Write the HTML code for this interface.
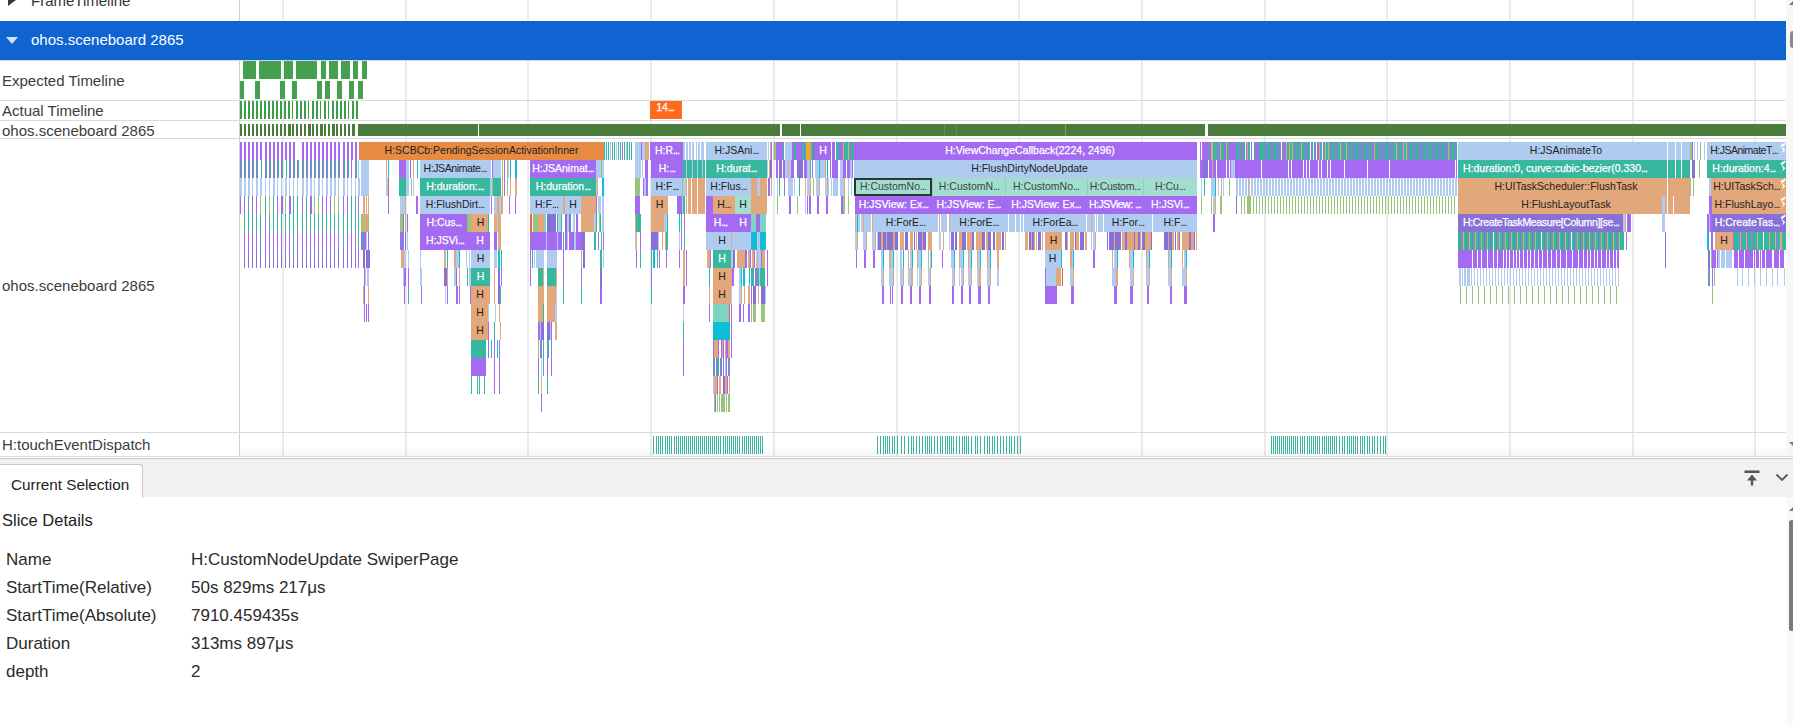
<!DOCTYPE html><html><head><meta charset="utf-8"><style>
*{margin:0;padding:0;box-sizing:border-box}
body{width:1793px;height:726px;overflow:hidden;background:#fff;font-family:"Liberation Sans",sans-serif;position:relative}
.a{position:absolute}
.t{position:absolute;overflow:hidden;white-space:nowrap;text-align:center;font-size:10.5px;line-height:18px}
.t i{font-style:normal;letter-spacing:-0.9px}
.w{-webkit-text-stroke:0.25px #fff}
.lbl{position:absolute;left:2px;font-size:15px;color:#3c3c3c;white-space:nowrap}
svg{position:absolute;left:0;top:0}
</style></head><body>
<div class="a" style="left:282px;top:0;width:2px;height:456px;background:#ebebeb"></div>
<div class="a" style="left:405px;top:0;width:2px;height:456px;background:#ebebeb"></div>
<div class="a" style="left:527px;top:0;width:2px;height:456px;background:#ebebeb"></div>
<div class="a" style="left:650px;top:0;width:2px;height:456px;background:#ebebeb"></div>
<div class="a" style="left:773px;top:0;width:2px;height:456px;background:#ebebeb"></div>
<div class="a" style="left:896px;top:0;width:2px;height:456px;background:#ebebeb"></div>
<div class="a" style="left:1018px;top:0;width:2px;height:456px;background:#ebebeb"></div>
<div class="a" style="left:1141px;top:0;width:2px;height:456px;background:#ebebeb"></div>
<div class="a" style="left:1264px;top:0;width:2px;height:456px;background:#ebebeb"></div>
<div class="a" style="left:1386px;top:0;width:2px;height:456px;background:#ebebeb"></div>
<div class="a" style="left:1509px;top:0;width:2px;height:456px;background:#ebebeb"></div>
<div class="a" style="left:1632px;top:0;width:2px;height:456px;background:#ebebeb"></div>
<div class="a" style="left:1754px;top:0;width:2px;height:456px;background:#ebebeb"></div>
<div class="a" style="left:239px;top:0;width:1px;height:456px;background:#c9d0de"></div>
<div class="a" style="left:0;top:60px;width:1786px;height:1px;background:#dadada"></div>
<div class="a" style="left:0;top:100px;width:1786px;height:1px;background:#dadada"></div>
<div class="a" style="left:0;top:120px;width:1786px;height:1px;background:#dadada"></div>
<div class="a" style="left:0;top:138px;width:1786px;height:1px;background:#dadada"></div>
<div class="a" style="left:0;top:432px;width:1786px;height:1px;background:#dadada"></div>
<div class="a" style="left:8px;top:-6px;width:0;height:0;border-left:8px solid #3a3a3a;border-top:6px solid transparent;border-bottom:6px solid transparent"></div>
<div class="lbl" style="left:31px;top:-8px;color:#333">FrameTimeline</div>
<div class="a" style="left:0;top:21px;width:1786px;height:39px;background:#0f64d2"></div>
<div class="a" style="left:6px;top:37px;width:0;height:0;border-top:7px solid #cfe0f7;border-left:6px solid transparent;border-right:6px solid transparent"></div>
<div class="lbl" style="left:31px;top:31px;color:#fff;font-size:15px">ohos.sceneboard 2865</div>
<div class="lbl" style="top:72px;color:#3c3c3c">Expected Timeline</div>
<div class="lbl" style="top:102px;color:#3c3c3c">Actual Timeline</div>
<div class="lbl" style="top:122px;color:#3c3c3c">ohos.sceneboard 2865</div>
<div class="lbl" style="top:277px;color:#3c3c3c">ohos.sceneboard 2865</div>
<div class="lbl" style="top:436px;color:#3c3c3c">H:touchEventDispatch</div>
<svg width="1793" height="726" shape-rendering="crispEdges"><path fill="#45a150" d="M243 61h13v18h-13zM259 61h22v18h-22zM284 61h9v18h-9zM296 61h21v18h-21zM321 61h5v18h-5zM329 61h9v18h-9zM341 61h9v18h-9zM353 61h5v18h-5zM362 61h5v18h-5zM240 81h4v18h-4zM255 81h5v18h-5zM280 81h5v18h-5zM292 81h5v18h-5zM317 81h5v18h-5zM325 81h5v18h-5zM337 81h5v18h-5zM349 81h5v18h-5zM358 81h5v18h-5z"/><path fill="#3d9e48" d="M240 101h2v18h-2zM244 101h2v18h-2zM248 101h2v18h-2zM252 101h2v18h-2zM256 101h2v18h-2zM260 101h2v18h-2zM264 101h2v18h-2zM268 101h2v18h-2zM272 101h2v18h-2zM276 101h2v18h-2zM280 101h2v18h-2zM284 101h2v18h-2zM288 101h2v18h-2zM292 101h1v18h-1zM296 101h2v18h-2zM300 101h2v18h-2zM304 101h2v18h-2zM308 101h1v18h-1zM312 101h2v18h-2zM316 101h2v18h-2zM320 101h1v18h-1zM324 101h2v18h-2zM328 101h1v18h-1zM332 101h2v18h-2zM336 101h2v18h-2zM340 101h2v18h-2zM344 101h2v18h-2zM348 101h1v18h-1zM352 101h2v18h-2zM356 101h2v18h-2z"/><path fill="#4a7d3c" d="M240 124h2v12h-2zM244 124h2v12h-2zM248 124h2v12h-2zM252 124h2v12h-2zM256 124h2v12h-2zM260 124h2v12h-2zM264 124h2v12h-2zM268 124h2v12h-2zM272 124h2v12h-2zM276 124h2v12h-2zM280 124h2v12h-2zM284 124h2v12h-2zM288 124h3v12h-3zM292 124h2v12h-2zM296 124h2v12h-2zM300 124h2v12h-2zM304 124h2v12h-2zM308 124h3v12h-3zM312 124h2v12h-2zM316 124h2v12h-2zM320 124h3v12h-3zM324 124h2v12h-2zM328 124h2v12h-2zM332 124h3v12h-3zM336 124h2v12h-2zM340 124h2v12h-2zM344 124h2v12h-2zM348 124h2v12h-2zM352 124h3v12h-3zM358 124h120v12h-120zM479 124h301v12h-301zM782 124h18v12h-18zM801 124h404v12h-404zM1208 124h578v12h-578z"/><path fill="#5f9050" d="M944 124h1v12h-1zM956 124h1v12h-1z"/><path fill="#8fa040" d="M1065 124h1v12h-1z"/><path fill="#ff6b1e" d="M650 101h32v18h-32z"/><path fill="#a56af2" d="M240 142h2v18h-2zM244 142h2v18h-2zM248 142h2v18h-2zM252 142h2v18h-2zM256 142h2v18h-2zM260 142h2v18h-2zM265 142h2v18h-2zM269 142h2v18h-2zM273 142h2v18h-2zM277 142h2v18h-2zM281 142h2v18h-2zM285 142h2v18h-2zM289 142h2v18h-2zM293 142h2v18h-2zM302 142h2v18h-2zM306 142h2v18h-2zM310 142h2v18h-2zM314 142h2v18h-2zM318 142h2v18h-2zM322 142h2v18h-2zM326 142h2v18h-2zM330 142h2v18h-2zM334 142h2v18h-2zM338 142h2v18h-2zM343 142h2v18h-2zM347 142h2v18h-2zM351 142h2v18h-2zM355 142h2v18h-2zM240 160h1v18h-1z"/><path fill="#38b79f" d="M241 160h1v18h-1z"/><path fill="#a56af2" d="M244 160h1v18h-1z"/><path fill="#38b79f" d="M245 160h1v18h-1z"/><path fill="#a56af2" d="M248 160h1v18h-1z"/><path fill="#38b79f" d="M249 160h1v18h-1z"/><path fill="#a56af2" d="M252 160h1v18h-1z"/><path fill="#38b79f" d="M253 160h1v18h-1z"/><path fill="#a56af2" d="M256 160h1v18h-1z"/><path fill="#38b79f" d="M257 160h1v18h-1zM261 160h1v18h-1z"/><path fill="#a56af2" d="M265 160h1v18h-1z"/><path fill="#38b79f" d="M266 160h1v18h-1z"/><path fill="#a56af2" d="M269 160h1v18h-1z"/><path fill="#38b79f" d="M270 160h1v18h-1z"/><path fill="#a56af2" d="M273 160h1v18h-1z"/><path fill="#38b79f" d="M274 160h1v18h-1z"/><path fill="#a56af2" d="M277 160h1v18h-1z"/><path fill="#38b79f" d="M278 160h1v18h-1z"/><path fill="#a56af2" d="M281 160h1v18h-1z"/><path fill="#38b79f" d="M282 160h1v18h-1zM286 160h1v18h-1z"/><path fill="#a56af2" d="M289 160h1v18h-1z"/><path fill="#38b79f" d="M290 160h1v18h-1z"/><path fill="#a56af2" d="M293 160h1v18h-1z"/><path fill="#38b79f" d="M294 160h1v18h-1z"/><path fill="#a56af2" d="M297 160h1v18h-1z"/><path fill="#38b79f" d="M298 160h1v18h-1z"/><path fill="#a56af2" d="M302 160h1v18h-1z"/><path fill="#38b79f" d="M303 160h1v18h-1z"/><path fill="#a56af2" d="M306 160h1v18h-1z"/><path fill="#38b79f" d="M307 160h1v18h-1z"/><path fill="#a56af2" d="M310 160h1v18h-1z"/><path fill="#38b79f" d="M311 160h1v18h-1z"/><path fill="#a56af2" d="M314 160h1v18h-1z"/><path fill="#38b79f" d="M315 160h1v18h-1z"/><path fill="#a56af2" d="M318 160h1v18h-1z"/><path fill="#38b79f" d="M319 160h1v18h-1z"/><path fill="#a56af2" d="M322 160h1v18h-1z"/><path fill="#38b79f" d="M323 160h1v18h-1z"/><path fill="#a56af2" d="M326 160h1v18h-1z"/><path fill="#38b79f" d="M327 160h1v18h-1z"/><path fill="#a56af2" d="M330 160h1v18h-1z"/><path fill="#38b79f" d="M331 160h1v18h-1z"/><path fill="#a56af2" d="M334 160h1v18h-1z"/><path fill="#38b79f" d="M335 160h1v18h-1z"/><path fill="#a56af2" d="M338 160h1v18h-1z"/><path fill="#38b79f" d="M339 160h1v18h-1z"/><path fill="#a56af2" d="M343 160h1v18h-1z"/><path fill="#38b79f" d="M344 160h1v18h-1z"/><path fill="#a56af2" d="M347 160h1v18h-1z"/><path fill="#38b79f" d="M348 160h1v18h-1z"/><path fill="#a56af2" d="M351 160h1v18h-1zM355 160h1v18h-1z"/><path fill="#38b79f" d="M356 160h1v18h-1z"/><path fill="#b0cbf0" d="M240 178h1v18h-1zM241 178h1v18h-1zM244 178h1v18h-1zM245 178h1v18h-1zM248 178h1v18h-1zM249 178h1v18h-1zM252 178h1v18h-1zM256 178h1v18h-1zM257 178h1v18h-1zM260 178h1v18h-1zM261 178h1v18h-1zM265 178h1v18h-1zM269 178h1v18h-1zM273 178h1v18h-1zM274 178h1v18h-1zM277 178h1v18h-1zM281 178h1v18h-1zM285 178h1v18h-1zM286 178h1v18h-1zM289 178h1v18h-1zM293 178h1v18h-1zM297 178h1v18h-1zM302 178h1v18h-1zM303 178h1v18h-1zM306 178h1v18h-1zM307 178h1v18h-1zM310 178h1v18h-1zM311 178h1v18h-1zM314 178h1v18h-1zM318 178h1v18h-1zM319 178h1v18h-1zM322 178h1v18h-1zM326 178h1v18h-1zM327 178h1v18h-1zM330 178h1v18h-1zM331 178h1v18h-1zM334 178h1v18h-1zM335 178h1v18h-1zM338 178h1v18h-1zM343 178h1v18h-1zM344 178h1v18h-1zM347 178h1v18h-1zM351 178h1v18h-1zM355 178h1v18h-1z"/><path fill="#a56af2" d="M240 196h1v18h-1zM244 196h1v18h-1z"/><path fill="#38b79f" d="M244 214h1v18h-1z"/><path fill="#a56af2" d="M244 232h1v18h-1z"/><path fill="#8770d6" d="M244 250h1v18h-1z"/><path fill="#38b79f" d="M248 196h1v18h-1zM248 214h1v18h-1z"/><path fill="#a56af2" d="M248 232h1v18h-1z"/><path fill="#8770d6" d="M248 250h1v18h-1z"/><path fill="#a56af2" d="M252 196h1v18h-1z"/><path fill="#38b79f" d="M252 214h1v18h-1z"/><path fill="#a56af2" d="M252 232h1v18h-1z"/><path fill="#8770d6" d="M252 250h1v18h-1z"/><path fill="#a56af2" d="M256 196h1v18h-1z"/><path fill="#38b79f" d="M256 214h1v18h-1z"/><path fill="#a56af2" d="M256 232h1v18h-1z"/><path fill="#8770d6" d="M256 250h1v18h-1z"/><path fill="#98c47e" d="M260 196h1v18h-1z"/><path fill="#38b79f" d="M260 214h1v18h-1zM260 232h1v18h-1z"/><path fill="#8770d6" d="M260 250h1v18h-1z"/><path fill="#38b79f" d="M265 196h1v18h-1z"/><path fill="#a56af2" d="M265 214h1v18h-1zM265 232h1v18h-1z"/><path fill="#8770d6" d="M265 250h1v18h-1z"/><path fill="#98c47e" d="M269 196h1v18h-1z"/><path fill="#38b79f" d="M269 214h1v18h-1z"/><path fill="#a56af2" d="M269 232h1v18h-1z"/><path fill="#8770d6" d="M269 250h1v18h-1z"/><path fill="#38b79f" d="M273 196h1v18h-1zM273 214h1v18h-1z"/><path fill="#a56af2" d="M273 232h1v18h-1z"/><path fill="#8770d6" d="M273 250h1v18h-1z"/><path fill="#a56af2" d="M277 196h1v18h-1z"/><path fill="#38b79f" d="M277 214h1v18h-1z"/><path fill="#a56af2" d="M277 232h1v18h-1z"/><path fill="#8770d6" d="M277 250h1v18h-1z"/><path fill="#a56af2" d="M281 196h2v18h-2z"/><path fill="#38b79f" d="M281 214h1v18h-1z"/><path fill="#a56af2" d="M281 232h1v18h-1z"/><path fill="#8770d6" d="M281 250h1v18h-1z"/><path fill="#98c47e" d="M285 196h1v18h-1z"/><path fill="#38b79f" d="M285 214h1v18h-1z"/><path fill="#a56af2" d="M285 232h1v18h-1z"/><path fill="#8770d6" d="M285 250h1v18h-1z"/><path fill="#a56af2" d="M289 196h2v18h-2z"/><path fill="#38b79f" d="M289 214h1v18h-1z"/><path fill="#a56af2" d="M289 232h1v18h-1z"/><path fill="#8770d6" d="M289 250h1v18h-1z"/><path fill="#38b79f" d="M293 196h1v18h-1zM293 214h1v18h-1zM293 232h1v18h-1z"/><path fill="#8770d6" d="M293 250h1v18h-1z"/><path fill="#38b79f" d="M297 196h1v18h-1zM297 214h1v18h-1z"/><path fill="#a56af2" d="M297 232h1v18h-1z"/><path fill="#8770d6" d="M297 250h1v18h-1z"/><path fill="#a56af2" d="M302 196h1v18h-1z"/><path fill="#38b79f" d="M302 214h1v18h-1z"/><path fill="#a56af2" d="M302 232h1v18h-1z"/><path fill="#8770d6" d="M302 250h1v18h-1z"/><path fill="#38b79f" d="M306 196h1v18h-1zM306 214h1v18h-1z"/><path fill="#a56af2" d="M306 232h1v18h-1z"/><path fill="#8770d6" d="M306 250h1v18h-1z"/><path fill="#a56af2" d="M310 196h2v18h-2z"/><path fill="#38b79f" d="M310 214h1v18h-1z"/><path fill="#a56af2" d="M310 232h1v18h-1z"/><path fill="#8770d6" d="M310 250h1v18h-1z"/><path fill="#98c47e" d="M314 196h1v18h-1z"/><path fill="#38b79f" d="M314 214h1v18h-1z"/><path fill="#a56af2" d="M314 232h1v18h-1z"/><path fill="#8770d6" d="M314 250h1v18h-1z"/><path fill="#98c47e" d="M318 196h1v18h-1z"/><path fill="#38b79f" d="M318 214h1v18h-1z"/><path fill="#a56af2" d="M318 232h1v18h-1z"/><path fill="#8770d6" d="M318 250h1v18h-1z"/><path fill="#a56af2" d="M322 196h1v18h-1z"/><path fill="#38b79f" d="M322 214h1v18h-1z"/><path fill="#a56af2" d="M322 232h1v18h-1z"/><path fill="#8770d6" d="M322 250h1v18h-1z"/><path fill="#a56af2" d="M326 196h1v18h-1z"/><path fill="#38b79f" d="M326 214h1v18h-1z"/><path fill="#a56af2" d="M326 232h1v18h-1z"/><path fill="#8770d6" d="M326 250h1v18h-1z"/><path fill="#a56af2" d="M330 196h1v18h-1z"/><path fill="#38b79f" d="M330 214h1v18h-1z"/><path fill="#a56af2" d="M330 232h1v18h-1z"/><path fill="#8770d6" d="M330 250h1v18h-1z"/><path fill="#98c47e" d="M334 196h1v18h-1z"/><path fill="#38b79f" d="M334 214h1v18h-1z"/><path fill="#a56af2" d="M334 232h1v18h-1z"/><path fill="#8770d6" d="M334 250h1v18h-1z"/><path fill="#98c47e" d="M338 196h1v18h-1z"/><path fill="#38b79f" d="M338 214h1v18h-1z"/><path fill="#a56af2" d="M338 232h1v18h-1z"/><path fill="#8770d6" d="M338 250h1v18h-1z"/><path fill="#a56af2" d="M343 196h1v18h-1z"/><path fill="#38b79f" d="M343 214h1v18h-1zM343 232h1v18h-1z"/><path fill="#8770d6" d="M343 250h1v18h-1z"/><path fill="#a56af2" d="M347 196h1v18h-1z"/><path fill="#38b79f" d="M347 214h1v18h-1z"/><path fill="#a56af2" d="M347 232h1v18h-1z"/><path fill="#8770d6" d="M347 250h1v18h-1z"/><path fill="#38b79f" d="M351 196h1v18h-1zM351 214h1v18h-1z"/><path fill="#a56af2" d="M351 232h1v18h-1z"/><path fill="#8770d6" d="M351 250h1v18h-1z"/><path fill="#38b79f" d="M355 196h1v18h-1zM355 214h1v18h-1z"/><path fill="#a56af2" d="M355 232h1v18h-1z"/><path fill="#8770d6" d="M355 250h1v18h-1z"/><path fill="#e88b42" d="M359 142h245v18h-245z"/><path fill="#b0cbf0" d="M358 160h1v18h-1zM361 160h8v18h-8z"/><path fill="#e2a77a" d="M386 160h1v18h-1z"/><path fill="#0fbdd5" d="M388 160h1v18h-1z"/><path fill="#a56af2" d="M399 160h7v18h-7z"/><path fill="#b0cbf0" d="M406 160h3v18h-3z"/><path fill="#a56af2" d="M410 160h1v18h-1z"/><path fill="#e2a77a" d="M413 160h1v18h-1z"/><path fill="#0fbdd5" d="M417 160h1v18h-1z"/><path fill="#b0cbf0" d="M420 160h71v18h-71z"/><path fill="#a56af2" d="M492 160h1v18h-1z"/><path fill="#b0cbf0" d="M493 160h8v18h-8z"/><path fill="#98c47e" d="M502 160h1v18h-1z"/><path fill="#a56af2" d="M504 160h1v18h-1z"/><path fill="#e2a77a" d="M507 160h1v18h-1z"/><path fill="#b0cbf0" d="M508 160h1v18h-1z"/><path fill="#0fbdd5" d="M510 160h1v18h-1zM515 160h2v18h-2z"/><path fill="#b0cbf0" d="M358 178h2v18h-2zM361 178h8v18h-8zM386 178h2v18h-2z"/><path fill="#e8604e" d="M388 178h1v18h-1z"/><path fill="#38b79f" d="M399 178h7v18h-7z"/><path fill="#b0cbf0" d="M406 178h3v18h-3z"/><path fill="#98c47e" d="M411 178h1v18h-1z"/><path fill="#b0cbf0" d="M413 178h1v18h-1z"/><path fill="#38b79f" d="M420 178h70v18h-70z"/><path fill="#b0cbf0" d="M490 178h2v18h-2z"/><path fill="#98c47e" d="M492 178h1v18h-1z"/><path fill="#38b79f" d="M493 178h8v18h-8z"/><path fill="#e2a77a" d="M502 178h1v18h-1z"/><path fill="#a56af2" d="M504 178h1v18h-1z"/><path fill="#98c47e" d="M507 178h1v18h-1z"/><path fill="#e2a77a" d="M510 178h1v18h-1zM515 178h2v18h-2z"/><path fill="#a56af2" d="M358 196h1v18h-1z"/><path fill="#e2a77a" d="M363 196h2v18h-2zM366 196h1v18h-1zM368 196h1v18h-1z"/><path fill="#a56af2" d="M388 196h1v18h-1z"/><path fill="#b0cbf0" d="M400 196h5v18h-5z"/><path fill="#e2a77a" d="M405 196h1v18h-1z"/><path fill="#a56af2" d="M416 196h2v18h-2z"/><path fill="#b0cbf0" d="M420 196h70v18h-70z"/><path fill="#a56af2" d="M491 196h1v18h-1z"/><path fill="#b0cbf0" d="M494 196h3v18h-3z"/><path fill="#e2a77a" d="M497 196h2v18h-2z"/><path fill="#b0cbf0" d="M499 196h2v18h-2z"/><path fill="#e2a77a" d="M501 196h2v18h-2z"/><path fill="#a56af2" d="M509 196h1v18h-1zM515 196h1v18h-1z"/><path fill="#38b79f" d="M358 214h1v18h-1z"/><path fill="#98c47e" d="M361 214h2v18h-2z"/><path fill="#e2a77a" d="M363 214h2v18h-2z"/><path fill="#98c47e" d="M365 214h1v18h-1z"/><path fill="#e2a77a" d="M366 214h2v18h-2z"/><path fill="#98c47e" d="M368 214h1v18h-1zM400 214h3v18h-3z"/><path fill="#a56af2" d="M403 214h1v18h-1z"/><path fill="#98c47e" d="M405 214h1v18h-1z"/><path fill="#a56af2" d="M407 214h1v18h-1zM420 214h47v18h-47z"/><path fill="#98c47e" d="M467 214h4v18h-4z"/><path fill="#e2a77a" d="M471 214h17v18h-17z"/><path fill="#0fbdd5" d="M488 214h1v18h-1z"/><path fill="#e2a77a" d="M494 214h3v18h-3z"/><path fill="#b0cbf0" d="M497 214h1v18h-1z"/><path fill="#e2a77a" d="M498 214h3v18h-3z"/><path fill="#38b79f" d="M358 232h1v18h-1z"/><path fill="#a56af2" d="M361 232h2v18h-2z"/><path fill="#38b79f" d="M363 232h1v18h-1z"/><path fill="#a56af2" d="M364 232h2v18h-2z"/><path fill="#b0cbf0" d="M366 232h1v18h-1z"/><path fill="#a56af2" d="M368 232h1v18h-1zM400 232h3v18h-3z"/><path fill="#38b79f" d="M403 232h1v18h-1z"/><path fill="#a56af2" d="M405 232h1v18h-1z"/><path fill="#b0cbf0" d="M407 232h1v18h-1z"/><path fill="#a56af2" d="M420 232h70v18h-70zM494 232h3v18h-3z"/><path fill="#e2a77a" d="M498 232h3v18h-3z"/><path fill="#a56af2" d="M358 250h1v18h-1z"/><path fill="#8770d6" d="M363 250h2v18h-2zM366 250h4v18h-4z"/><path fill="#e2a77a" d="M401 250h3v18h-3z"/><path fill="#b0cbf0" d="M404 250h2v18h-2zM408 250h1v18h-1zM420 250h1v18h-1z"/><path fill="#e2a77a" d="M444 250h2v18h-2z"/><path fill="#0fbdd5" d="M447 250h1v18h-1z"/><path fill="#e2a77a" d="M454 250h2v18h-2z"/><path fill="#b0cbf0" d="M456 250h3v18h-3z"/><path fill="#0fbdd5" d="M459 250h1v18h-1z"/><path fill="#b0cbf0" d="M466 250h1v18h-1zM469 250h1v18h-1zM471 250h19v18h-19zM494 250h3v18h-3z"/><path fill="#0fbdd5" d="M498 250h1v18h-1z"/><path fill="#38b79f" d="M499 250h1v18h-1z"/><path fill="#0fbdd5" d="M501 250h1v18h-1z"/><path fill="#a56af2" d="M364 268h1v18h-1z"/><path fill="#b0cbf0" d="M365 268h1v18h-1zM367 268h2v18h-2zM403 268h1v18h-1z"/><path fill="#a56af2" d="M404 268h2v18h-2zM408 268h1v18h-1z"/><path fill="#b0cbf0" d="M420 268h2v18h-2z"/><path fill="#8770d6" d="M444 268h3v18h-3z"/><path fill="#e2a77a" d="M447 268h1v18h-1z"/><path fill="#b0cbf0" d="M454 268h2v18h-2z"/><path fill="#8770d6" d="M456 268h1v18h-1z"/><path fill="#e2a77a" d="M459 268h1v18h-1z"/><path fill="#38b79f" d="M467 268h1v18h-1z"/><path fill="#b0cbf0" d="M469 268h2v18h-2z"/><path fill="#38b79f" d="M471 268h19v18h-19z"/><path fill="#e2a77a" d="M494 268h1v18h-1z"/><path fill="#8770d6" d="M498 268h2v18h-2z"/><path fill="#a56af2" d="M501 268h1v18h-1z"/><path fill="#e2a77a" d="M363 286h1v18h-1z"/><path fill="#a56af2" d="M364 286h1v18h-1z"/><path fill="#e2a77a" d="M368 286h1v18h-1z"/><path fill="#a56af2" d="M404 286h1v18h-1z"/><path fill="#38b79f" d="M408 286h1v18h-1z"/><path fill="#a56af2" d="M421 286h1v18h-1z"/><path fill="#b0cbf0" d="M445 286h1v18h-1z"/><path fill="#a56af2" d="M447 286h1v18h-1zM456 286h2v18h-2zM459 286h1v18h-1zM470 286h1v18h-1z"/><path fill="#e2a77a" d="M471 286h19v18h-19zM494 286h1v18h-1z"/><path fill="#8770d6" d="M498 286h2v18h-2z"/><path fill="#38b79f" d="M500 286h1v18h-1z"/><path fill="#a56af2" d="M364 304h1v18h-1zM366 304h1v18h-1zM368 304h1v18h-1z"/><path fill="#e2a77a" d="M471 304h18v18h-18z"/><path fill="#b0cbf0" d="M488 304h1v18h-1zM495 304h1v18h-1z"/><path fill="#e2a77a" d="M499 304h1v18h-1zM471 322h17v18h-17z"/><path fill="#a56af2" d="M488 322h1v18h-1z"/><path fill="#38b79f" d="M494 322h1v18h-1z"/><path fill="#e2a77a" d="M500 322h1v18h-1z"/><path fill="#38b79f" d="M471 340h15v18h-15z"/><path fill="#a56af2" d="M471 358h15v18h-15z"/><path fill="#38b79f" d="M471 376h1v18h-1zM477 376h1v18h-1zM479 376h1v18h-1zM484 376h1v18h-1z"/><path fill="#a56af2" d="M488 340h1v18h-1zM494 340h1v54h-1zM499 340h1v54h-1z"/><path fill="#0fbdd5" d="M491 340h1v18h-1zM497 340h1v18h-1zM604 142h1v18h-1z"/><path fill="#38b79f" d="M606 142h1v18h-1zM608 142h1v18h-1z"/><path fill="#b0cbf0" d="M610 142h1v18h-1z"/><path fill="#38b79f" d="M612 142h1v18h-1zM614 142h1v18h-1z"/><path fill="#b0cbf0" d="M616 142h1v18h-1z"/><path fill="#38b79f" d="M618 142h1v18h-1zM620 142h1v18h-1z"/><path fill="#a56af2" d="M622 142h1v18h-1z"/><path fill="#38b79f" d="M624 142h1v18h-1z"/><path fill="#b0cbf0" d="M626 142h1v18h-1z"/><path fill="#38b79f" d="M627 142h1v18h-1zM629 142h1v18h-1zM631 142h1v18h-1z"/><path fill="#b0cbf0" d="M635 142h6v18h-6z"/><path fill="#a56af2" d="M641 142h1v18h-1z"/><path fill="#b0cbf0" d="M642 142h3v18h-3z"/><path fill="#e2a77a" d="M645 142h4v18h-4z"/><path fill="#a56af2" d="M650 142h33v18h-33z"/><path fill="#b0cbf0" d="M683 142h2v18h-2zM686 142h2v18h-2zM689 142h2v18h-2zM692 142h2v18h-2zM696 142h1v18h-1zM698 142h2v18h-2zM701 142h3v18h-3z"/><path fill="#a56af2" d="M530 160h66v18h-66z"/><path fill="#b0cbf0" d="M596 160h5v18h-5z"/><path fill="#98c47e" d="M601 160h1v18h-1z"/><path fill="#b0cbf0" d="M602 160h2v18h-2zM635 160h6v18h-6zM642 160h1v18h-1z"/><path fill="#a56af2" d="M645 160h3v18h-3zM651 160h32v18h-32z"/><path fill="#38b79f" d="M683 160h22v18h-22z"/><path fill="#b0cbf0" d="M686 160h1v18h-1zM692 160h1v18h-1zM697 160h1v18h-1zM702 160h1v18h-1z"/><path fill="#38b79f" d="M530 178h66v18h-66z"/><path fill="#b0cbf0" d="M596 178h1v18h-1z"/><path fill="#e2a77a" d="M597 178h1v18h-1z"/><path fill="#0fbdd5" d="M602 178h2v18h-2z"/><path fill="#98c47e" d="M635 178h5v18h-5z"/><path fill="#a56af2" d="M643 178h1v18h-1z"/><path fill="#b0cbf0" d="M644 178h2v18h-2z"/><path fill="#a56af2" d="M646 178h2v18h-2z"/><path fill="#b0cbf0" d="M651 178h31v18h-31z"/><path fill="#98c47e" d="M682 178h1v18h-1z"/><path fill="#b0cbf0" d="M683 178h3v18h-3z"/><path fill="#e2a77a" d="M686 178h1v18h-1zM688 178h3v18h-3zM692 178h5v18h-5zM698 178h4v18h-4zM702 178h3v18h-3z"/><path fill="#b0cbf0" d="M530 196h33v18h-33z"/><path fill="#e2a77a" d="M563 196h2v18h-2z"/><path fill="#b0cbf0" d="M565 196h16v18h-16z"/><path fill="#e2a77a" d="M581 196h15v18h-15z"/><path fill="#a56af2" d="M596 196h1v18h-1z"/><path fill="#b0cbf0" d="M598 196h3v18h-3zM602 196h2v18h-2z"/><path fill="#a56af2" d="M635 196h5v18h-5z"/><path fill="#e2a77a" d="M651 196h17v18h-17z"/><path fill="#a56af2" d="M677 196h5v18h-5z"/><path fill="#b0cbf0" d="M682 196h1v18h-1z"/><path fill="#38b79f" d="M683 196h2v18h-2z"/><path fill="#e2a77a" d="M686 196h1v18h-1zM688 196h3v18h-3zM692 196h5v18h-5zM698 196h4v18h-4zM702 196h3v18h-3z"/><path fill="#e8604e" d="M530 214h2v18h-2z"/><path fill="#98c47e" d="M533 214h5v18h-5z"/><path fill="#e2a77a" d="M538 214h6v18h-6z"/><path fill="#7dd4c1" d="M544 214h2v18h-2z"/><path fill="#8770d6" d="M547 214h9v18h-9z"/><path fill="#38b79f" d="M557 214h1v18h-1z"/><path fill="#b0cbf0" d="M558 214h3v18h-3z"/><path fill="#38b79f" d="M561 214h1v18h-1z"/><path fill="#8770d6" d="M565 214h2v18h-2z"/><path fill="#b0cbf0" d="M567 214h2v18h-2z"/><path fill="#8770d6" d="M569 214h2v18h-2z"/><path fill="#b0cbf0" d="M573 214h2v18h-2z"/><path fill="#a56af2" d="M576 214h2v18h-2z"/><path fill="#e2a77a" d="M581 214h13v18h-13z"/><path fill="#b0cbf0" d="M594 214h2v18h-2z"/><path fill="#38b79f" d="M596 214h1v18h-1z"/><path fill="#98c47e" d="M599 214h1v18h-1z"/><path fill="#38b79f" d="M600 214h1v18h-1z"/><path fill="#b0cbf0" d="M602 214h2v18h-2z"/><path fill="#e2a77a" d="M635 214h1v18h-1z"/><path fill="#38b79f" d="M636 214h5v18h-5z"/><path fill="#e2a77a" d="M651 214h13v18h-13z"/><path fill="#b0cbf0" d="M664 214h3v18h-3z"/><path fill="#38b79f" d="M667 214h1v18h-1z"/><path fill="#0fbdd5" d="M679 214h1v18h-1z"/><path fill="#38b79f" d="M681 214h1v18h-1z"/><path fill="#a56af2" d="M684 214h1v18h-1zM530 232h16v18h-16z"/><path fill="#b0cbf0" d="M546 232h1v18h-1z"/><path fill="#a56af2" d="M547 232h10v18h-10z"/><path fill="#b0cbf0" d="M557 232h1v18h-1z"/><path fill="#a56af2" d="M558 232h4v18h-4z"/><path fill="#38b79f" d="M563 232h1v18h-1z"/><path fill="#a56af2" d="M565 232h2v18h-2z"/><path fill="#b0cbf0" d="M567 232h1v18h-1z"/><path fill="#a56af2" d="M569 232h5v18h-5z"/><path fill="#b0cbf0" d="M574 232h2v18h-2z"/><path fill="#a56af2" d="M576 232h6v18h-6z"/><path fill="#8770d6" d="M582 232h3v18h-3z"/><path fill="#38b79f" d="M594 232h2v18h-2z"/><path fill="#a56af2" d="M598 232h1v18h-1z"/><path fill="#38b79f" d="M601 232h1v18h-1z"/><path fill="#a56af2" d="M603 232h1v18h-1z"/><path fill="#b0cbf0" d="M635 232h1v18h-1z"/><path fill="#e2a77a" d="M636 232h1v18h-1z"/><path fill="#a56af2" d="M640 232h1v18h-1z"/><path fill="#8770d6" d="M651 232h7v18h-7z"/><path fill="#b0cbf0" d="M658 232h1v18h-1z"/><path fill="#e2a77a" d="M662 232h1v18h-1zM665 232h1v18h-1z"/><path fill="#38b79f" d="M666 232h2v18h-2z"/><path fill="#b0cbf0" d="M679 232h1v18h-1z"/><path fill="#a56af2" d="M681 232h1v18h-1z"/><path fill="#38b79f" d="M684 232h1v18h-1z"/><path fill="#a56af2" d="M530 250h1v18h-1z"/><path fill="#38b79f" d="M532 250h1v18h-1z"/><path fill="#b0cbf0" d="M534 250h1v18h-1zM536 250h8v18h-8zM547 250h10v18h-10z"/><path fill="#a56af2" d="M563 250h1v18h-1z"/><path fill="#98c47e" d="M581 250h1v18h-1z"/><path fill="#8770d6" d="M583 250h2v18h-2z"/><path fill="#38b79f" d="M600 250h2v18h-2z"/><path fill="#b0cbf0" d="M603 250h1v18h-1z"/><path fill="#a56af2" d="M636 250h1v18h-1z"/><path fill="#38b79f" d="M640 250h1v18h-1zM651 250h1v18h-1z"/><path fill="#0fbdd5" d="M653 250h2v18h-2z"/><path fill="#38b79f" d="M657 250h1v18h-1z"/><path fill="#a56af2" d="M659 250h1v18h-1zM666 250h1v18h-1zM679 250h1v18h-1z"/><path fill="#e2a77a" d="M683 250h2v18h-2z"/><path fill="#a56af2" d="M686 250h1v18h-1zM530 268h1v18h-1z"/><path fill="#38b79f" d="M538 268h5v18h-5z"/><path fill="#e2a77a" d="M543 268h1v18h-1z"/><path fill="#38b79f" d="M547 268h9v18h-9z"/><path fill="#e2a77a" d="M556 268h1v18h-1z"/><path fill="#a56af2" d="M563 268h1v18h-1zM581 268h1v18h-1z"/><path fill="#8770d6" d="M600 268h2v18h-2z"/><path fill="#a56af2" d="M651 268h1v18h-1z"/><path fill="#e2a77a" d="M683 268h2v18h-2z"/><path fill="#a56af2" d="M686 268h1v18h-1z"/><path fill="#e2a77a" d="M538 286h6v18h-6zM547 286h9v18h-9z"/><path fill="#b0cbf0" d="M556 286h1v18h-1z"/><path fill="#38b79f" d="M563 286h1v18h-1zM581 286h1v18h-1z"/><path fill="#a56af2" d="M600 286h2v18h-2z"/><path fill="#38b79f" d="M651 286h1v18h-1z"/><path fill="#a56af2" d="M683 286h2v18h-2z"/><path fill="#e2a77a" d="M538 304h5v18h-5z"/><path fill="#38b79f" d="M543 304h1v18h-1z"/><path fill="#e2a77a" d="M547 304h8v18h-8z"/><path fill="#b0cbf0" d="M555 304h2v18h-2zM683 304h1v18h-1z"/><path fill="#a56af2" d="M538 322h2v18h-2z"/><path fill="#b0cbf0" d="M540 322h1v18h-1z"/><path fill="#8770d6" d="M541 322h3v18h-3zM547 322h3v18h-3z"/><path fill="#b0cbf0" d="M550 322h1v18h-1z"/><path fill="#a56af2" d="M551 322h1v18h-1z"/><path fill="#e2a77a" d="M555 322h2v18h-2z"/><path fill="#38b79f" d="M683 322h1v18h-1z"/><path fill="#98c47e" d="M538 340h1v18h-1z"/><path fill="#a56af2" d="M540 340h2v18h-2z"/><path fill="#38b79f" d="M543 340h1v18h-1zM547 340h2v18h-2z"/><path fill="#a56af2" d="M551 340h1v18h-1zM538 358h1v18h-1z"/><path fill="#b0cbf0" d="M541 358h1v18h-1z"/><path fill="#38b79f" d="M543 358h1v18h-1z"/><path fill="#a56af2" d="M547 358h1v18h-1zM551 358h1v18h-1z"/><path fill="#38b79f" d="M538 376h1v18h-1z"/><path fill="#e2a77a" d="M541 376h1v18h-1z"/><path fill="#38b79f" d="M547 376h1v18h-1z"/><path fill="#a56af2" d="M541 394h1v18h-1zM683 340h1v36h-1z"/><path fill="#b0cbf0" d="M706 142h61v18h-61z"/><path fill="#38b79f" d="M706 160h61v18h-61z"/><path fill="#b0cbf0" d="M706 178h45v18h-45z"/><path fill="#e2a77a" d="M751 178h6v18h-6z"/><path fill="#b0cbf0" d="M757 178h3v18h-3z"/><path fill="#e2a77a" d="M760 178h7v18h-7z"/><path fill="#a56af2" d="M706 196h7v18h-7z"/><path fill="#e2a77a" d="M713 196h22v18h-22z"/><path fill="#a2ddce" d="M735 196h16v18h-16z"/><path fill="#e2a77a" d="M751 196h16v18h-16z"/><path fill="#a56af2" d="M706 214h29v18h-29zM735 214h16v18h-16z"/><path fill="#7dd4c1" d="M751 214h5v18h-5z"/><path fill="#a56af2" d="M756 214h4v18h-4z"/><path fill="#7dd4c1" d="M760 214h6v18h-6z"/><path fill="#b0cbf0" d="M706 232h45v18h-45z"/><path fill="#e2a77a" d="M731 232h1v18h-1z"/><path fill="#0fbdd5" d="M751 232h6v18h-6z"/><path fill="#b0cbf0" d="M757 232h3v18h-3z"/><path fill="#0fbdd5" d="M760 232h6v18h-6z"/><path fill="#e2a77a" d="M707 250h3v18h-3z"/><path fill="#a56af2" d="M710 250h1v18h-1z"/><path fill="#38b79f" d="M713 250h18v18h-18z"/><path fill="#b0cbf0" d="M731 250h2v18h-2z"/><path fill="#8770d6" d="M733 250h2v18h-2z"/><path fill="#e2a77a" d="M737 250h8v18h-8z"/><path fill="#a56af2" d="M745 250h2v18h-2z"/><path fill="#e2a77a" d="M748 250h2v18h-2z"/><path fill="#a56af2" d="M750 250h1v18h-1z"/><path fill="#e2a77a" d="M752 250h2v18h-2z"/><path fill="#a56af2" d="M754 250h1v18h-1z"/><path fill="#b0cbf0" d="M756 250h1v18h-1z"/><path fill="#e2a77a" d="M757 250h1v18h-1z"/><path fill="#b0cbf0" d="M758 250h3v18h-3z"/><path fill="#a56af2" d="M761 250h1v18h-1z"/><path fill="#e2a77a" d="M762 250h3v18h-3z"/><path fill="#a56af2" d="M767 250h1v18h-1z"/><path fill="#0fbdd5" d="M709 268h1v18h-1z"/><path fill="#e2a77a" d="M713 268h19v18h-19z"/><path fill="#a56af2" d="M732 268h2v18h-2z"/><path fill="#b0cbf0" d="M739 268h2v18h-2z"/><path fill="#0fbdd5" d="M741 268h1v18h-1zM743 268h2v18h-2zM749 268h1v18h-1z"/><path fill="#38b79f" d="M751 268h3v18h-3z"/><path fill="#a56af2" d="M755 268h2v18h-2z"/><path fill="#38b79f" d="M757 268h2v18h-2z"/><path fill="#b0cbf0" d="M759 268h1v18h-1z"/><path fill="#38b79f" d="M760 268h5v18h-5z"/><path fill="#a56af2" d="M767 268h1v18h-1z"/><path fill="#e2a77a" d="M709 286h1v18h-1zM713 286h18v18h-18z"/><path fill="#b0cbf0" d="M731 286h1v18h-1zM739 286h2v18h-2z"/><path fill="#e2a77a" d="M741 286h1v18h-1zM744 286h1v18h-1zM748 286h2v18h-2z"/><path fill="#a56af2" d="M751 286h1v18h-1z"/><path fill="#8770d6" d="M753 286h3v18h-3z"/><path fill="#e2a77a" d="M758 286h1v18h-1z"/><path fill="#8770d6" d="M761 286h4v18h-4z"/><path fill="#b0cbf0" d="M765 286h1v18h-1z"/><path fill="#a56af2" d="M709 304h1v18h-1z"/><path fill="#7dd4c1" d="M713 304h16v18h-16z"/><path fill="#e8604e" d="M729 304h1v18h-1z"/><path fill="#a56af2" d="M731 304h1v18h-1zM739 304h2v18h-2zM743 304h1v18h-1zM748 304h2v18h-2z"/><path fill="#98c47e" d="M751 304h1v18h-1zM753 304h3v18h-3zM761 304h4v18h-4z"/><path fill="#0fbdd5" d="M713 322h17v18h-17z"/><path fill="#a56af2" d="M731 322h1v18h-1zM713 340h1v18h-1z"/><path fill="#e2a77a" d="M714 340h4v18h-4z"/><path fill="#a56af2" d="M718 340h1v18h-1zM721 340h1v18h-1z"/><path fill="#e2a77a" d="M722 340h1v18h-1z"/><path fill="#a56af2" d="M723 340h1v18h-1z"/><path fill="#e2a77a" d="M725 340h1v18h-1z"/><path fill="#a56af2" d="M726 340h2v18h-2z"/><path fill="#e2a77a" d="M728 340h2v18h-2z"/><path fill="#a56af2" d="M731 340h1v18h-1z"/><path fill="#38b79f" d="M713 358h1v18h-1z"/><path fill="#a56af2" d="M714 358h1v18h-1z"/><path fill="#38b79f" d="M716 358h1v18h-1z"/><path fill="#a56af2" d="M717 358h1v18h-1z"/><path fill="#38b79f" d="M718 358h1v18h-1z"/><path fill="#a56af2" d="M720 358h1v18h-1z"/><path fill="#38b79f" d="M721 358h1v18h-1z"/><path fill="#a56af2" d="M723 358h1v18h-1z"/><path fill="#b0cbf0" d="M725 358h1v18h-1z"/><path fill="#a56af2" d="M726 358h1v18h-1z"/><path fill="#38b79f" d="M728 358h1v18h-1z"/><path fill="#a56af2" d="M729 358h1v18h-1z"/><path fill="#b0cbf0" d="M713 376h1v18h-1z"/><path fill="#e2a77a" d="M714 376h3v18h-3z"/><path fill="#a56af2" d="M717 376h1v18h-1z"/><path fill="#e2a77a" d="M719 376h2v18h-2z"/><path fill="#8770d6" d="M723 376h2v18h-2z"/><path fill="#e2a77a" d="M725 376h2v18h-2z"/><path fill="#a56af2" d="M727 376h1v18h-1z"/><path fill="#e2a77a" d="M729 376h1v18h-1z"/><path fill="#98c47e" d="M714 394h1v18h-1z"/><path fill="#a56af2" d="M715 394h1v18h-1z"/><path fill="#98c47e" d="M717 394h1v18h-1zM719 394h1v18h-1zM721 394h4v18h-4zM726 394h1v18h-1zM728 394h2v18h-2z"/><path fill="#b0cbf0" d="M768 142h1v18h-1z"/><path fill="#e2a77a" d="M770 142h1v18h-1z"/><path fill="#a56af2" d="M771 142h1v18h-1z"/><path fill="#b0cbf0" d="M773 142h1v18h-1z"/><path fill="#98c47e" d="M774 142h2v18h-2z"/><path fill="#a56af2" d="M776 142h7v18h-7z"/><path fill="#38b79f" d="M783 142h1v18h-1z"/><path fill="#b0cbf0" d="M785 142h7v18h-7z"/><path fill="#a56af2" d="M792 142h2v18h-2z"/><path fill="#38b79f" d="M794 142h2v18h-2z"/><path fill="#a56af2" d="M796 142h6v18h-6z"/><path fill="#38b79f" d="M802 142h2v18h-2z"/><path fill="#a56af2" d="M804 142h1v18h-1z"/><path fill="#38b79f" d="M805 142h1v18h-1z"/><path fill="#e9a83a" d="M806 142h5v18h-5z"/><path fill="#38b79f" d="M811 142h2v18h-2z"/><path fill="#8770d6" d="M813 142h2v18h-2z"/><path fill="#a56af2" d="M815 142h16v18h-16zM832 142h3v18h-3z"/><path fill="#38b79f" d="M836 142h3v18h-3z"/><path fill="#a56af2" d="M839 142h4v18h-4z"/><path fill="#e2a77a" d="M843 142h1v18h-1z"/><path fill="#38b79f" d="M844 142h4v18h-4z"/><path fill="#e2a77a" d="M848 142h1v18h-1z"/><path fill="#38b79f" d="M849 142h2v18h-2z"/><path fill="#a56af2" d="M851 142h1v18h-1z"/><path fill="#38b79f" d="M852 142h2v18h-2z"/><path fill="#b0cbf0" d="M767 160h1v18h-1z"/><path fill="#e2a77a" d="M769 160h1v18h-1z"/><path fill="#8770d6" d="M770 160h2v18h-2z"/><path fill="#a56af2" d="M776 160h2v18h-2z"/><path fill="#8770d6" d="M779 160h3v18h-3z"/><path fill="#a56af2" d="M783 160h2v18h-2z"/><path fill="#b0cbf0" d="M785 160h3v18h-3z"/><path fill="#e2a77a" d="M788 160h1v18h-1z"/><path fill="#b0cbf0" d="M789 160h2v18h-2z"/><path fill="#a56af2" d="M791 160h3v18h-3z"/><path fill="#8770d6" d="M797 160h6v18h-6z"/><path fill="#a56af2" d="M804 160h3v18h-3z"/><path fill="#b0cbf0" d="M807 160h3v18h-3z"/><path fill="#38b79f" d="M810 160h1v18h-1z"/><path fill="#a56af2" d="M812 160h1v18h-1z"/><path fill="#b0cbf0" d="M815 160h4v18h-4z"/><path fill="#0fbdd5" d="M819 160h1v18h-1z"/><path fill="#b0cbf0" d="M820 160h5v18h-5z"/><path fill="#e2a77a" d="M825 160h1v18h-1z"/><path fill="#0fbdd5" d="M827 160h1v18h-1z"/><path fill="#a56af2" d="M830 160h1v18h-1zM832 160h6v18h-6z"/><path fill="#b0cbf0" d="M840 160h3v18h-3z"/><path fill="#a56af2" d="M843 160h3v18h-3zM847 160h3v18h-3z"/><path fill="#b0cbf0" d="M850 160h2v18h-2z"/><path fill="#a56af2" d="M852 160h1v18h-1zM768 178h2v18h-2z"/><path fill="#98c47e" d="M771 178h1v18h-1z"/><path fill="#b0cbf0" d="M777 178h1v18h-1z"/><path fill="#38b79f" d="M779 178h1v18h-1z"/><path fill="#a56af2" d="M784 178h1v18h-1z"/><path fill="#b0cbf0" d="M788 178h2v18h-2zM790 178h3v18h-3zM794 178h1v18h-1z"/><path fill="#38b79f" d="M799 178h1v18h-1z"/><path fill="#e2a77a" d="M805 178h1v18h-1z"/><path fill="#b0cbf0" d="M807 178h3v18h-3z"/><path fill="#e2a77a" d="M810 178h1v18h-1z"/><path fill="#98c47e" d="M813 178h1v18h-1z"/><path fill="#b0cbf0" d="M816 178h3v18h-3z"/><path fill="#e2a77a" d="M819 178h1v18h-1z"/><path fill="#b0cbf0" d="M825 178h2v18h-2z"/><path fill="#e2a77a" d="M827 178h1v18h-1z"/><path fill="#b0cbf0" d="M828 178h1v18h-1zM831 178h1v18h-1zM833 178h5v18h-5zM840 178h4v18h-4z"/><path fill="#e2a77a" d="M844 178h1v18h-1z"/><path fill="#b0cbf0" d="M848 178h1v18h-1zM851 178h1v18h-1z"/><path fill="#98c47e" d="M777 196h1v18h-1z"/><path fill="#a56af2" d="M789 196h2v18h-2z"/><path fill="#98c47e" d="M797 196h1v18h-1z"/><path fill="#b0cbf0" d="M805 196h1v18h-1z"/><path fill="#a56af2" d="M807 196h1v18h-1zM809 196h2v18h-2zM817 196h2v18h-2zM826 196h2v18h-2zM841 196h2v18h-2z"/><path fill="#98c47e" d="M843 196h2v18h-2zM848 196h1v18h-1z"/><path fill="#a56af2" d="M854 142h343v18h-343z"/><path fill="#b0cbf0" d="M854 160h343v18h-343z"/><path fill="#a2ddce" d="M854 178h78v18h-78zM933 178h72v18h-72zM1005 178h82v18h-82zM1087 178h56v18h-56zM1143 178h54v18h-54z"/><path fill="#8fcfbf" d="M932 178h1v18h-1zM1005 178h1v18h-1zM1087 178h1v18h-1zM1143 178h1v18h-1z"/><path fill="#a56af2" d="M855 196h77v18h-77zM932 196h73v18h-73zM1005 196h82v18h-82zM1087 196h56v18h-56zM1143 196h54v18h-54z"/><path fill="#e2a77a" d="M855 214h1v18h-1z"/><path fill="#b0cbf0" d="M856 214h1v18h-1z"/><path fill="#0fbdd5" d="M857 214h1v18h-1z"/><path fill="#b0cbf0" d="M858 214h2v18h-2zM861 214h2v18h-2z"/><path fill="#e2a77a" d="M863 214h1v18h-1z"/><path fill="#b0cbf0" d="M864 214h7v18h-7z"/><path fill="#e2a77a" d="M872 214h1v18h-1z"/><path fill="#b0cbf0" d="M873 214h65v18h-65z"/><path fill="#e2a77a" d="M939 214h1v18h-1z"/><path fill="#b0cbf0" d="M941 214h6v18h-6z"/><path fill="#e2a77a" d="M949 214h1v18h-1z"/><path fill="#b0cbf0" d="M950 214h58v18h-58zM1009 214h6v18h-6zM1016 214h4v18h-4zM1021 214h2v18h-2zM1021 214h2v18h-2zM1024 214h62v18h-62zM1087 214h4v18h-4z"/><path fill="#e2a77a" d="M1091 214h1v18h-1z"/><path fill="#b0cbf0" d="M1092 214h3v18h-3zM1096 214h1v18h-1zM1098 214h5v18h-5zM1104 214h48v18h-48zM1153 214h44v18h-44zM855 232h2v18h-2z"/><path fill="#e2a77a" d="M857 232h1v18h-1z"/><path fill="#b0cbf0" d="M863 232h3v18h-3z"/><path fill="#e2a77a" d="M866 232h1v18h-1z"/><path fill="#b0cbf0" d="M872 232h3v18h-3z"/><path fill="#e2a77a" d="M875 232h1v18h-1z"/><path fill="#b0cbf0" d="M877 232h1v18h-1z"/><path fill="#8770d6" d="M878 232h3v18h-3z"/><path fill="#e2a77a" d="M881 232h2v18h-2z"/><path fill="#8770d6" d="M883 232h3v18h-3z"/><path fill="#e2a77a" d="M886 232h1v18h-1z"/><path fill="#8770d6" d="M887 232h3v18h-3zM890 232h3v18h-3z"/><path fill="#e2a77a" d="M893 232h2v18h-2z"/><path fill="#8770d6" d="M895 232h3v18h-3z"/><path fill="#e2a77a" d="M900 232h4v18h-4z"/><path fill="#8770d6" d="M905 232h3v18h-3z"/><path fill="#e2a77a" d="M910 232h3v18h-3z"/><path fill="#8770d6" d="M914 232h1v18h-1z"/><path fill="#e2a77a" d="M916 232h1v18h-1z"/><path fill="#8770d6" d="M918 232h4v18h-4z"/><path fill="#e2a77a" d="M922 232h1v18h-1z"/><path fill="#8770d6" d="M923 232h3v18h-3z"/><path fill="#e2a77a" d="M928 232h4v18h-4z"/><path fill="#b0cbf0" d="M939 232h2v18h-2z"/><path fill="#e2a77a" d="M943 232h1v18h-1z"/><path fill="#b0cbf0" d="M949 232h1v18h-1z"/><path fill="#8770d6" d="M951 232h3v18h-3zM955 232h2v18h-2z"/><path fill="#e2a77a" d="M959 232h3v18h-3z"/><path fill="#8770d6" d="M962 232h4v18h-4z"/><path fill="#e2a77a" d="M967 232h5v18h-5z"/><path fill="#8770d6" d="M972 232h2v18h-2z"/><path fill="#e2a77a" d="M976 232h6v18h-6z"/><path fill="#8770d6" d="M982 232h3v18h-3z"/><path fill="#e2a77a" d="M986 232h2v18h-2z"/><path fill="#8770d6" d="M988 232h3v18h-3zM993 232h2v18h-2z"/><path fill="#e2a77a" d="M996 232h5v18h-5z"/><path fill="#8770d6" d="M1002 232h2v18h-2z"/><path fill="#e2a77a" d="M1005 232h1v18h-1zM1025 232h3v18h-3zM1025 232h2v18h-2z"/><path fill="#8770d6" d="M1029 232h2v18h-2z"/><path fill="#e2a77a" d="M1031 232h1v18h-1z"/><path fill="#8770d6" d="M1032 232h2v18h-2z"/><path fill="#e2a77a" d="M1034 232h1v18h-1zM1036 232h1v18h-1z"/><path fill="#8770d6" d="M1038 232h3v18h-3z"/><path fill="#e2a77a" d="M1042 232h1v18h-1zM1045 232h17v18h-17z"/><path fill="#8770d6" d="M1065 232h2v18h-2z"/><path fill="#e2a77a" d="M1067 232h1v18h-1zM1070 232h4v18h-4z"/><path fill="#8770d6" d="M1075 232h1v18h-1z"/><path fill="#e2a77a" d="M1076 232h3v18h-3z"/><path fill="#8770d6" d="M1080 232h4v18h-4z"/><path fill="#e2a77a" d="M1085 232h2v18h-2z"/><path fill="#b0cbf0" d="M1091 232h1v18h-1zM1093 232h2v18h-2z"/><path fill="#e2a77a" d="M1095 232h1v18h-1z"/><path fill="#8770d6" d="M1107 232h1v18h-1zM1109 232h5v18h-5z"/><path fill="#e2a77a" d="M1114 232h1v18h-1z"/><path fill="#8770d6" d="M1115 232h3v18h-3z"/><path fill="#e2a77a" d="M1118 232h1v18h-1z"/><path fill="#8770d6" d="M1118 232h3v18h-3z"/><path fill="#e2a77a" d="M1122 232h3v18h-3z"/><path fill="#8770d6" d="M1125 232h2v18h-2z"/><path fill="#e2a77a" d="M1127 232h7v18h-7z"/><path fill="#8770d6" d="M1134 232h1v18h-1z"/><path fill="#e2a77a" d="M1135 232h3v18h-3z"/><path fill="#8770d6" d="M1138 232h2v18h-2z"/><path fill="#e2a77a" d="M1140 232h1v18h-1z"/><path fill="#8770d6" d="M1142 232h3v18h-3z"/><path fill="#e2a77a" d="M1145 232h6v18h-6z"/><path fill="#8770d6" d="M1151 232h1v18h-1zM1164 232h4v18h-4z"/><path fill="#e2a77a" d="M1168 232h1v18h-1z"/><path fill="#8770d6" d="M1169 232h3v18h-3z"/><path fill="#e2a77a" d="M1172 232h2v18h-2z"/><path fill="#8770d6" d="M1175 232h1v18h-1z"/><path fill="#e2a77a" d="M1177 232h2v18h-2z"/><path fill="#8770d6" d="M1179 232h1v18h-1z"/><path fill="#e2a77a" d="M1182 232h7v18h-7z"/><path fill="#8770d6" d="M1189 232h2v18h-2z"/><path fill="#e2a77a" d="M1191 232h3v18h-3z"/><path fill="#8770d6" d="M1194 232h1v18h-1z"/><path fill="#e2a77a" d="M1196 232h1v18h-1z"/><path fill="#a56af2" d="M856 250h1v18h-1zM864 250h2v18h-2zM873 250h2v18h-2z"/><path fill="#b0cbf0" d="M881 250h2v18h-2z"/><path fill="#0fbdd5" d="M883 250h1v18h-1z"/><path fill="#e2a77a" d="M889 250h2v18h-2z"/><path fill="#b0cbf0" d="M891 250h2v18h-2z"/><path fill="#0fbdd5" d="M893 250h1v18h-1z"/><path fill="#b0cbf0" d="M900 250h2v18h-2z"/><path fill="#0fbdd5" d="M903 250h1v18h-1z"/><path fill="#e2a77a" d="M908 250h1v18h-1z"/><path fill="#b0cbf0" d="M910 250h2v18h-2z"/><path fill="#0fbdd5" d="M912 250h1v18h-1z"/><path fill="#e2a77a" d="M917 250h1v18h-1z"/><path fill="#b0cbf0" d="M918 250h3v18h-3z"/><path fill="#0fbdd5" d="M921 250h1v18h-1z"/><path fill="#e2a77a" d="M928 250h1v18h-1z"/><path fill="#b0cbf0" d="M930 250h1v18h-1z"/><path fill="#0fbdd5" d="M931 250h1v18h-1z"/><path fill="#a56af2" d="M942 250h1v18h-1z"/><path fill="#b0cbf0" d="M951 250h3v18h-3z"/><path fill="#0fbdd5" d="M954 250h1v18h-1z"/><path fill="#e2a77a" d="M959 250h1v18h-1z"/><path fill="#b0cbf0" d="M960 250h3v18h-3z"/><path fill="#0fbdd5" d="M963 250h1v18h-1z"/><path fill="#e2a77a" d="M968 250h1v18h-1z"/><path fill="#b0cbf0" d="M969 250h2v18h-2z"/><path fill="#0fbdd5" d="M971 250h1v18h-1z"/><path fill="#e2a77a" d="M977 250h1v18h-1z"/><path fill="#b0cbf0" d="M978 250h2v18h-2z"/><path fill="#0fbdd5" d="M980 250h1v18h-1z"/><path fill="#e2a77a" d="M987 250h1v18h-1z"/><path fill="#b0cbf0" d="M988 250h2v18h-2z"/><path fill="#0fbdd5" d="M990 250h1v18h-1z"/><path fill="#e2a77a" d="M997 250h2v18h-2z"/><path fill="#b0cbf0" d="M1045 250h16v18h-16z"/><path fill="#0fbdd5" d="M1061 250h1v18h-1z"/><path fill="#e2a77a" d="M1070 250h2v18h-2z"/><path fill="#b0cbf0" d="M1072 250h1v18h-1z"/><path fill="#0fbdd5" d="M1073 250h1v18h-1z"/><path fill="#a56af2" d="M1093 250h2v18h-2z"/><path fill="#e2a77a" d="M1112 250h1v18h-1z"/><path fill="#b0cbf0" d="M1114 250h3v18h-3z"/><path fill="#0fbdd5" d="M1117 250h1v18h-1z"/><path fill="#e2a77a" d="M1129 250h1v18h-1z"/><path fill="#b0cbf0" d="M1130 250h3v18h-3z"/><path fill="#0fbdd5" d="M1133 250h1v18h-1z"/><path fill="#e2a77a" d="M1146 250h1v18h-1z"/><path fill="#b0cbf0" d="M1147 250h2v18h-2z"/><path fill="#0fbdd5" d="M1149 250h1v18h-1z"/><path fill="#e2a77a" d="M1168 250h1v18h-1z"/><path fill="#b0cbf0" d="M1169 250h2v18h-2z"/><path fill="#0fbdd5" d="M1171 250h1v18h-1z"/><path fill="#e2a77a" d="M1182 250h1v18h-1z"/><path fill="#b0cbf0" d="M1184 250h2v18h-2z"/><path fill="#0fbdd5" d="M1186 250h1v18h-1z"/><path fill="#b0cbf0" d="M881 268h2v18h-2z"/><path fill="#e2a77a" d="M883 268h1v18h-1z"/><path fill="#b0cbf0" d="M889 268h4v18h-4z"/><path fill="#e2a77a" d="M893 268h1v18h-1z"/><path fill="#b0cbf0" d="M900 268h3v18h-3z"/><path fill="#e2a77a" d="M903 268h1v18h-1z"/><path fill="#b0cbf0" d="M908 268h3v18h-3z"/><path fill="#e2a77a" d="M911 268h2v18h-2z"/><path fill="#b0cbf0" d="M917 268h1v18h-1zM919 268h2v18h-2z"/><path fill="#e2a77a" d="M921 268h1v18h-1z"/><path fill="#b0cbf0" d="M928 268h2v18h-2z"/><path fill="#e2a77a" d="M930 268h1v18h-1z"/><path fill="#b0cbf0" d="M952 268h2v18h-2z"/><path fill="#e2a77a" d="M954 268h1v18h-1z"/><path fill="#b0cbf0" d="M959 268h1v18h-1zM961 268h2v18h-2z"/><path fill="#e2a77a" d="M963 268h1v18h-1z"/><path fill="#b0cbf0" d="M968 268h3v18h-3z"/><path fill="#e2a77a" d="M971 268h1v18h-1z"/><path fill="#b0cbf0" d="M977 268h2v18h-2z"/><path fill="#e2a77a" d="M979 268h2v18h-2z"/><path fill="#b0cbf0" d="M987 268h3v18h-3z"/><path fill="#e2a77a" d="M990 268h1v18h-1z"/><path fill="#b0cbf0" d="M997 268h2v18h-2z"/><path fill="#a56af2" d="M1045 268h1v18h-1z"/><path fill="#b0cbf0" d="M1046 268h10v18h-10z"/><path fill="#e2a77a" d="M1056 268h5v18h-5z"/><path fill="#e8604e" d="M1062 268h1v18h-1z"/><path fill="#b0cbf0" d="M1070 268h3v18h-3z"/><path fill="#e2a77a" d="M1073 268h1v18h-1z"/><path fill="#b0cbf0" d="M1112 268h4v18h-4z"/><path fill="#e2a77a" d="M1116 268h2v18h-2z"/><path fill="#b0cbf0" d="M1130 268h3v18h-3z"/><path fill="#e2a77a" d="M1133 268h1v18h-1z"/><path fill="#b0cbf0" d="M1146 268h3v18h-3z"/><path fill="#e2a77a" d="M1149 268h1v18h-1z"/><path fill="#b0cbf0" d="M1168 268h1v18h-1zM1169 268h2v18h-2z"/><path fill="#e2a77a" d="M1171 268h1v18h-1z"/><path fill="#b0cbf0" d="M1182 268h4v18h-4z"/><path fill="#e2a77a" d="M1186 268h1v18h-1z"/><path fill="#a56af2" d="M882 286h2v18h-2zM890 286h1v18h-1zM892 286h1v18h-1zM901 286h2v18h-2zM910 286h2v18h-2zM919 286h2v18h-2zM929 286h2v18h-2zM952 286h2v18h-2zM961 286h2v18h-2zM969 286h2v18h-2zM978 286h1v18h-1zM979 286h2v18h-2zM988 286h2v18h-2zM1045 286h12v18h-12zM1071 286h3v18h-3zM1114 286h3v18h-3zM1130 286h3v18h-3zM1147 286h2v18h-2zM1170 286h2v18h-2zM1184 286h3v18h-3zM1200 142h1v18h-1zM1202 142h7v18h-7z"/><path fill="#38b79f" d="M1209 142h1v18h-1z"/><path fill="#a56af2" d="M1210 142h1v18h-1z"/><path fill="#e2a77a" d="M1211 142h2v18h-2z"/><path fill="#38b79f" d="M1213 142h4v18h-4z"/><path fill="#a56af2" d="M1217 142h1v18h-1z"/><path fill="#38b79f" d="M1218 142h1v18h-1z"/><path fill="#a56af2" d="M1219 142h1v18h-1z"/><path fill="#e2a77a" d="M1220 142h1v18h-1z"/><path fill="#38b79f" d="M1221 142h3v18h-3z"/><path fill="#a56af2" d="M1224 142h2v18h-2z"/><path fill="#e2a77a" d="M1226 142h1v18h-1z"/><path fill="#38b79f" d="M1227 142h2v18h-2z"/><path fill="#a56af2" d="M1229 142h7v18h-7z"/><path fill="#38b79f" d="M1236 142h2v18h-2z"/><path fill="#a56af2" d="M1238 142h1v18h-1z"/><path fill="#38b79f" d="M1239 142h1v18h-1z"/><path fill="#a56af2" d="M1240 142h1v18h-1z"/><path fill="#38b79f" d="M1241 142h2v18h-2z"/><path fill="#a56af2" d="M1243 142h1v18h-1z"/><path fill="#38b79f" d="M1244 142h1v18h-1z"/><path fill="#a56af2" d="M1246 142h1v18h-1z"/><path fill="#e2a77a" d="M1247 142h1v18h-1z"/><path fill="#38b79f" d="M1248 142h2v18h-2z"/><path fill="#a56af2" d="M1251 142h1v18h-1zM1254 142h1v18h-1z"/><path fill="#38b79f" d="M1255 142h1v18h-1z"/><path fill="#a56af2" d="M1256 142h2v18h-2z"/><path fill="#38b79f" d="M1258 142h1v18h-1z"/><path fill="#a56af2" d="M1259 142h1v18h-1z"/><path fill="#38b79f" d="M1260 142h2v18h-2z"/><path fill="#a56af2" d="M1262 142h1v18h-1z"/><path fill="#38b79f" d="M1262 142h2v18h-2z"/><path fill="#a56af2" d="M1264 142h1v18h-1z"/><path fill="#38b79f" d="M1265 142h2v18h-2z"/><path fill="#a56af2" d="M1267 142h1v18h-1z"/><path fill="#38b79f" d="M1268 142h2v18h-2z"/><path fill="#a56af2" d="M1270 142h1v18h-1z"/><path fill="#38b79f" d="M1271 142h2v18h-2z"/><path fill="#a56af2" d="M1273 142h1v18h-1z"/><path fill="#38b79f" d="M1274 142h2v18h-2z"/><path fill="#a56af2" d="M1276 142h1v18h-1z"/><path fill="#38b79f" d="M1277 142h2v18h-2z"/><path fill="#a56af2" d="M1279 142h2v18h-2zM1282 142h1v18h-1z"/><path fill="#38b79f" d="M1283 142h1v18h-1z"/><path fill="#a56af2" d="M1284 142h2v18h-2z"/><path fill="#e2a77a" d="M1286 142h1v18h-1z"/><path fill="#38b79f" d="M1287 142h2v18h-2z"/><path fill="#e2a77a" d="M1289 142h1v18h-1z"/><path fill="#38b79f" d="M1290 142h2v18h-2z"/><path fill="#e2a77a" d="M1292 142h1v18h-1z"/><path fill="#38b79f" d="M1293 142h2v18h-2z"/><path fill="#a56af2" d="M1200 160h3v18h-3z"/><path fill="#8770d6" d="M1203 160h5v18h-5z"/><path fill="#a56af2" d="M1209 160h3v18h-3z"/><path fill="#e2a77a" d="M1212 160h1v18h-1z"/><path fill="#a56af2" d="M1213 160h3v18h-3zM1217 160h9v18h-9zM1227 160h2v18h-2zM1230 160h1v18h-1z"/><path fill="#b0cbf0" d="M1231 160h4v18h-4z"/><path fill="#a56af2" d="M1235 160h26v18h-26zM1262 160h26v18h-26zM1289 160h2v18h-2zM1292 160h3v18h-3zM1295 142h1v18h-1z"/><path fill="#38b79f" d="M1296 142h2v18h-2z"/><path fill="#a56af2" d="M1298 142h1v18h-1z"/><path fill="#38b79f" d="M1299 142h2v18h-2z"/><path fill="#e2a77a" d="M1301 142h1v18h-1z"/><path fill="#38b79f" d="M1302 142h2v18h-2z"/><path fill="#a56af2" d="M1304 142h1v18h-1z"/><path fill="#38b79f" d="M1305 142h2v18h-2z"/><path fill="#a56af2" d="M1307 142h1v18h-1z"/><path fill="#38b79f" d="M1308 142h2v18h-2z"/><path fill="#a56af2" d="M1311 142h1v18h-1z"/><path fill="#38b79f" d="M1312 142h1v18h-1z"/><path fill="#a56af2" d="M1314 142h1v18h-1z"/><path fill="#38b79f" d="M1315 142h1v18h-1z"/><path fill="#a56af2" d="M1317 142h2v18h-2z"/><path fill="#e2a77a" d="M1319 142h1v18h-1z"/><path fill="#38b79f" d="M1320 142h2v18h-2z"/><path fill="#a56af2" d="M1323 142h1v18h-1z"/><path fill="#38b79f" d="M1324 142h1v18h-1z"/><path fill="#e2a77a" d="M1325 142h1v18h-1z"/><path fill="#38b79f" d="M1326 142h2v18h-2z"/><path fill="#e2a77a" d="M1328 142h1v18h-1z"/><path fill="#38b79f" d="M1329 142h2v18h-2z"/><path fill="#a56af2" d="M1331 142h1v18h-1z"/><path fill="#38b79f" d="M1332 142h2v18h-2z"/><path fill="#a56af2" d="M1334 142h1v18h-1z"/><path fill="#38b79f" d="M1335 142h2v18h-2z"/><path fill="#a56af2" d="M1337 142h1v18h-1z"/><path fill="#38b79f" d="M1338 142h2v18h-2z"/><path fill="#e2a77a" d="M1340 142h1v18h-1z"/><path fill="#38b79f" d="M1341 142h2v18h-2z"/><path fill="#a56af2" d="M1343 142h1v18h-1z"/><path fill="#38b79f" d="M1344 142h2v18h-2z"/><path fill="#e2a77a" d="M1346 142h1v18h-1z"/><path fill="#38b79f" d="M1347 142h2v18h-2z"/><path fill="#a56af2" d="M1349 142h1v18h-1z"/><path fill="#38b79f" d="M1350 142h2v18h-2z"/><path fill="#a56af2" d="M1352 142h1v18h-1z"/><path fill="#38b79f" d="M1353 142h2v18h-2z"/><path fill="#a56af2" d="M1355 142h1v18h-1z"/><path fill="#38b79f" d="M1356 142h2v18h-2z"/><path fill="#a56af2" d="M1358 142h1v18h-1z"/><path fill="#38b79f" d="M1359 142h2v18h-2z"/><path fill="#a56af2" d="M1361 142h1v18h-1z"/><path fill="#38b79f" d="M1362 142h1v18h-1z"/><path fill="#a56af2" d="M1363 142h1v18h-1z"/><path fill="#38b79f" d="M1364 142h2v18h-2z"/><path fill="#a56af2" d="M1366 142h1v18h-1z"/><path fill="#38b79f" d="M1367 142h2v18h-2z"/><path fill="#a56af2" d="M1369 142h1v18h-1z"/><path fill="#38b79f" d="M1370 142h2v18h-2z"/><path fill="#a56af2" d="M1372 142h2v18h-2z"/><path fill="#e2a77a" d="M1374 142h1v18h-1z"/><path fill="#38b79f" d="M1375 142h3v18h-3z"/><path fill="#a56af2" d="M1378 142h1v18h-1z"/><path fill="#38b79f" d="M1379 142h1v18h-1z"/><path fill="#a56af2" d="M1295 160h8v18h-8zM1304 160h2v18h-2zM1307 160h2v18h-2zM1310 160h8v18h-8zM1319 160h2v18h-2zM1322 160h5v18h-5zM1328 160h2v18h-2zM1331 160h13v18h-13zM1345 160h22v18h-22zM1368 160h12v18h-12zM1380 142h1v18h-1z"/><path fill="#38b79f" d="M1381 142h2v18h-2z"/><path fill="#a56af2" d="M1383 142h1v18h-1z"/><path fill="#38b79f" d="M1384 142h1v18h-1z"/><path fill="#a56af2" d="M1385 142h1v18h-1z"/><path fill="#38b79f" d="M1386 142h2v18h-2z"/><path fill="#a56af2" d="M1388 142h1v18h-1z"/><path fill="#38b79f" d="M1389 142h1v18h-1z"/><path fill="#a56af2" d="M1390 142h1v18h-1z"/><path fill="#38b79f" d="M1391 142h2v18h-2z"/><path fill="#a56af2" d="M1393 142h1v18h-1z"/><path fill="#38b79f" d="M1394 142h2v18h-2z"/><path fill="#e2a77a" d="M1396 142h1v18h-1z"/><path fill="#38b79f" d="M1397 142h2v18h-2z"/><path fill="#a56af2" d="M1399 142h1v18h-1z"/><path fill="#38b79f" d="M1400 142h2v18h-2z"/><path fill="#a56af2" d="M1402 142h1v18h-1z"/><path fill="#e2a77a" d="M1403 142h1v18h-1z"/><path fill="#38b79f" d="M1404 142h2v18h-2z"/><path fill="#e2a77a" d="M1406 142h1v18h-1z"/><path fill="#38b79f" d="M1407 142h2v18h-2z"/><path fill="#a56af2" d="M1409 142h1v18h-1z"/><path fill="#38b79f" d="M1410 142h2v18h-2z"/><path fill="#a56af2" d="M1412 142h1v18h-1z"/><path fill="#38b79f" d="M1413 142h2v18h-2z"/><path fill="#a56af2" d="M1415 142h1v18h-1z"/><path fill="#38b79f" d="M1416 142h2v18h-2z"/><path fill="#a56af2" d="M1418 142h1v18h-1z"/><path fill="#38b79f" d="M1419 142h2v18h-2z"/><path fill="#a56af2" d="M1421 142h1v18h-1z"/><path fill="#38b79f" d="M1422 142h1v18h-1z"/><path fill="#a56af2" d="M1423 142h1v18h-1z"/><path fill="#38b79f" d="M1424 142h2v18h-2z"/><path fill="#a56af2" d="M1426 142h1v18h-1z"/><path fill="#38b79f" d="M1427 142h2v18h-2z"/><path fill="#a56af2" d="M1429 142h1v18h-1z"/><path fill="#38b79f" d="M1430 142h2v18h-2z"/><path fill="#a56af2" d="M1432 142h1v18h-1z"/><path fill="#38b79f" d="M1433 142h2v18h-2z"/><path fill="#a56af2" d="M1435 142h1v18h-1z"/><path fill="#38b79f" d="M1436 142h2v18h-2z"/><path fill="#a56af2" d="M1438 142h1v18h-1z"/><path fill="#38b79f" d="M1439 142h2v18h-2z"/><path fill="#a56af2" d="M1441 142h1v18h-1z"/><path fill="#38b79f" d="M1442 142h2v18h-2z"/><path fill="#a56af2" d="M1444 142h1v18h-1z"/><path fill="#38b79f" d="M1445 142h1v18h-1z"/><path fill="#a56af2" d="M1446 142h1v18h-1z"/><path fill="#38b79f" d="M1447 142h1v18h-1z"/><path fill="#e2a77a" d="M1448 142h1v18h-1z"/><path fill="#38b79f" d="M1449 142h2v18h-2z"/><path fill="#a56af2" d="M1451 142h1v18h-1z"/><path fill="#38b79f" d="M1452 142h2v18h-2z"/><path fill="#a56af2" d="M1454 142h1v18h-1z"/><path fill="#38b79f" d="M1455 142h2v18h-2z"/><path fill="#a56af2" d="M1380 160h9v18h-9zM1390 160h65v18h-65zM1456 160h1v18h-1z"/><path fill="#e2a77a" d="M1212 160h1v18h-1z"/><path fill="#b0cbf0" d="M1236 178h2v18h-2zM1239 178h2v18h-2zM1242 178h2v18h-2zM1245 178h2v18h-2zM1248 178h2v18h-2zM1251 178h2v18h-2zM1254 178h2v18h-2zM1257 178h2v18h-2zM1260 178h2v18h-2zM1263 178h2v18h-2zM1266 178h2v18h-2zM1269 178h2v18h-2zM1272 178h2v18h-2zM1275 178h2v18h-2zM1278 178h2v18h-2zM1281 178h2v18h-2zM1284 178h2v18h-2zM1287 178h2v18h-2zM1290 178h2v18h-2zM1293 178h2v18h-2zM1296 178h2v18h-2zM1299 178h2v18h-2zM1302 178h2v18h-2zM1305 178h2v18h-2zM1308 178h2v18h-2zM1311 178h2v18h-2zM1314 178h2v18h-2zM1317 178h2v18h-2zM1320 178h2v18h-2zM1323 178h2v18h-2zM1326 178h2v18h-2zM1329 178h2v18h-2zM1332 178h2v18h-2zM1335 178h2v18h-2zM1338 178h2v18h-2zM1341 178h2v18h-2zM1344 178h2v18h-2zM1347 178h2v18h-2zM1350 178h2v18h-2zM1353 178h2v18h-2zM1356 178h2v18h-2zM1359 178h2v18h-2zM1362 178h2v18h-2zM1365 178h2v18h-2zM1368 178h2v18h-2zM1371 178h2v18h-2zM1374 178h2v18h-2zM1377 178h2v18h-2zM1380 178h2v18h-2zM1383 178h2v18h-2zM1386 178h2v18h-2zM1389 178h2v18h-2zM1392 178h2v18h-2zM1395 178h2v18h-2zM1398 178h2v18h-2zM1401 178h2v18h-2zM1404 178h2v18h-2zM1407 178h2v18h-2zM1410 178h2v18h-2zM1413 178h2v18h-2zM1416 178h2v18h-2zM1419 178h2v18h-2zM1422 178h2v18h-2zM1425 178h2v18h-2zM1428 178h2v18h-2zM1431 178h2v18h-2zM1434 178h2v18h-2zM1437 178h2v18h-2zM1440 178h2v18h-2zM1443 178h2v18h-2zM1446 178h2v18h-2zM1449 178h2v18h-2zM1452 178h2v18h-2zM1455 178h2v18h-2zM1201 178h1v18h-1z"/><path fill="#38b79f" d="M1204 178h1v18h-1z"/><path fill="#b0cbf0" d="M1211 178h4v18h-4z"/><path fill="#0fbdd5" d="M1215 178h1v18h-1z"/><path fill="#b0cbf0" d="M1218 178h1v18h-1z"/><path fill="#e2a77a" d="M1221 178h1v18h-1z"/><path fill="#b0cbf0" d="M1223 178h1v18h-1z"/><path fill="#98c47e" d="M1229 178h1v18h-1z"/><path fill="#e2a77a" d="M1248 178h1v18h-1z"/><path fill="#98c47e" d="M1241 196h1v18h-1zM1244 196h1v18h-1zM1247 196h1v18h-1zM1250 196h1v18h-1zM1253 196h1v18h-1zM1256 196h1v18h-1zM1259 196h1v18h-1zM1262 196h1v18h-1zM1265 196h1v18h-1zM1268 196h1v18h-1zM1271 196h1v18h-1zM1274 196h1v18h-1zM1277 196h1v18h-1zM1280 196h1v18h-1zM1283 196h1v18h-1zM1286 196h1v18h-1zM1289 196h1v18h-1zM1292 196h1v18h-1zM1295 196h1v18h-1zM1298 196h1v18h-1zM1301 196h1v18h-1zM1304 196h1v18h-1zM1307 196h1v18h-1zM1310 196h1v18h-1zM1313 196h1v18h-1zM1316 196h1v18h-1zM1319 196h1v18h-1zM1322 196h1v18h-1zM1325 196h1v18h-1zM1328 196h1v18h-1zM1331 196h1v18h-1zM1334 196h1v18h-1zM1337 196h1v18h-1zM1340 196h1v18h-1zM1343 196h1v18h-1zM1346 196h1v18h-1zM1349 196h1v18h-1zM1352 196h1v18h-1zM1355 196h1v18h-1zM1358 196h1v18h-1zM1361 196h1v18h-1zM1364 196h1v18h-1zM1367 196h1v18h-1zM1370 196h1v18h-1zM1373 196h1v18h-1zM1376 196h1v18h-1zM1379 196h1v18h-1zM1382 196h1v18h-1zM1385 196h1v18h-1zM1388 196h1v18h-1zM1391 196h1v18h-1zM1394 196h1v18h-1zM1397 196h1v18h-1zM1400 196h1v18h-1zM1403 196h1v18h-1zM1406 196h1v18h-1zM1409 196h1v18h-1zM1412 196h1v18h-1zM1415 196h1v18h-1zM1418 196h1v18h-1zM1421 196h1v18h-1zM1424 196h1v18h-1zM1427 196h1v18h-1zM1430 196h1v18h-1zM1433 196h1v18h-1zM1436 196h1v18h-1zM1439 196h1v18h-1zM1442 196h1v18h-1zM1445 196h1v18h-1zM1448 196h1v18h-1zM1451 196h1v18h-1zM1454 196h1v18h-1zM1201 196h1v18h-1zM1211 196h1v18h-1z"/><path fill="#b0cbf0" d="M1213 196h2v18h-2z"/><path fill="#e2a77a" d="M1215 196h1v18h-1z"/><path fill="#98c47e" d="M1220 196h2v18h-2z"/><path fill="#8770d6" d="M1236 196h1v18h-1z"/><path fill="#98c47e" d="M1248 196h2v18h-2z"/><path fill="#a56af2" d="M1213 214h2v18h-2z"/><path fill="#b0cbf0" d="M1458 142h232v18h-232z"/><path fill="#38b79f" d="M1458 160h232v18h-232z"/><path fill="#e2a77a" d="M1458 178h232v18h-232zM1458 196h232v18h-232z"/><path fill="#fff" d="M1667 142h1v36h-1zM1675 142h1v36h-1zM1681 142h1v36h-1zM1667 196h1v18h-1zM1673 196h1v18h-1zM1667 178h1v18h-1z"/><path fill="#b0cbf0" d="M1662 196h3v36h-3z"/><path fill="#8770d6" d="M1458 214h165v18h-165z"/><path fill="#b0cbf0" d="M1623 214h2v18h-2z"/><path fill="#e2a77a" d="M1625 214h1v18h-1z"/><path fill="#a56af2" d="M1627 214h4v18h-4z"/><path fill="#38b79f" d="M1458 232h166v18h-166z"/><path fill="#8770d6" d="M1460 232h1v18h-1z"/><path fill="#e2a77a" d="M1463 232h1v18h-1z"/><path fill="#8770d6" d="M1466 232h1v18h-1z"/><path fill="#e2a77a" d="M1469 232h1v18h-1z"/><path fill="#8770d6" d="M1472 232h1v18h-1z"/><path fill="#e2a77a" d="M1475 232h1v18h-1z"/><path fill="#8770d6" d="M1478 232h1v18h-1z"/><path fill="#e2a77a" d="M1481 232h1v18h-1z"/><path fill="#8770d6" d="M1484 232h1v18h-1z"/><path fill="#e2a77a" d="M1487 232h1v18h-1z"/><path fill="#8770d6" d="M1490 232h1v18h-1z"/><path fill="#fff" d="M1493 232h1v18h-1z"/><path fill="#8770d6" d="M1496 232h1v18h-1z"/><path fill="#e2a77a" d="M1499 232h1v18h-1z"/><path fill="#8770d6" d="M1502 232h1v18h-1z"/><path fill="#e2a77a" d="M1505 232h1v18h-1z"/><path fill="#8770d6" d="M1508 232h1v18h-1z"/><path fill="#e2a77a" d="M1511 232h1v18h-1z"/><path fill="#8770d6" d="M1514 232h1v18h-1z"/><path fill="#e2a77a" d="M1517 232h1v18h-1z"/><path fill="#8770d6" d="M1520 232h1v18h-1z"/><path fill="#e2a77a" d="M1523 232h1v18h-1z"/><path fill="#8770d6" d="M1526 232h1v18h-1z"/><path fill="#e2a77a" d="M1529 232h1v18h-1z"/><path fill="#8770d6" d="M1532 232h1v18h-1z"/><path fill="#e2a77a" d="M1535 232h1v18h-1z"/><path fill="#8770d6" d="M1538 232h1v18h-1z"/><path fill="#fff" d="M1541 232h1v18h-1z"/><path fill="#8770d6" d="M1544 232h1v18h-1z"/><path fill="#e2a77a" d="M1547 232h1v18h-1z"/><path fill="#8770d6" d="M1550 232h1v18h-1z"/><path fill="#e2a77a" d="M1553 232h1v18h-1z"/><path fill="#8770d6" d="M1556 232h1v18h-1z"/><path fill="#e2a77a" d="M1559 232h1v18h-1z"/><path fill="#8770d6" d="M1562 232h1v18h-1z"/><path fill="#e2a77a" d="M1565 232h1v18h-1z"/><path fill="#8770d6" d="M1568 232h1v18h-1z"/><path fill="#fff" d="M1571 232h1v18h-1z"/><path fill="#8770d6" d="M1574 232h1v18h-1z"/><path fill="#e2a77a" d="M1577 232h1v18h-1z"/><path fill="#8770d6" d="M1580 232h1v18h-1z"/><path fill="#e2a77a" d="M1583 232h1v18h-1z"/><path fill="#8770d6" d="M1586 232h1v18h-1z"/><path fill="#e2a77a" d="M1589 232h1v18h-1z"/><path fill="#8770d6" d="M1592 232h1v18h-1z"/><path fill="#e2a77a" d="M1595 232h1v18h-1z"/><path fill="#8770d6" d="M1598 232h1v18h-1z"/><path fill="#e2a77a" d="M1601 232h1v18h-1z"/><path fill="#8770d6" d="M1604 232h1v18h-1z"/><path fill="#e2a77a" d="M1607 232h1v18h-1z"/><path fill="#8770d6" d="M1610 232h1v18h-1z"/><path fill="#e2a77a" d="M1613 232h1v18h-1z"/><path fill="#8770d6" d="M1616 232h1v18h-1z"/><path fill="#e2a77a" d="M1619 232h1v18h-1z"/><path fill="#a56af2" d="M1626 232h1v18h-1zM1458 250h161v18h-161z"/><path fill="#fff" d="M1472 250h1v18h-1zM1477 250h1v18h-1zM1481 250h1v18h-1zM1487 250h1v18h-1zM1493 250h1v18h-1zM1497 250h1v18h-1zM1503 250h1v18h-1zM1506 250h1v18h-1zM1509 250h1v18h-1zM1513 250h1v18h-1zM1516 250h1v18h-1zM1519 250h1v18h-1zM1523 250h1v18h-1zM1527 250h1v18h-1zM1530 250h1v18h-1zM1534 250h1v18h-1zM1538 250h1v18h-1zM1542 250h1v18h-1zM1547 250h1v18h-1zM1551 250h1v18h-1zM1556 250h1v18h-1zM1560 250h1v18h-1zM1566 250h1v18h-1zM1572 250h1v18h-1zM1578 250h1v18h-1zM1583 250h1v18h-1zM1587 250h1v18h-1zM1590 250h1v18h-1zM1594 250h1v18h-1zM1597 250h1v18h-1zM1601 250h1v18h-1zM1606 250h1v18h-1zM1609 250h1v18h-1zM1613 250h1v18h-1zM1616 250h1v18h-1z"/><path fill="#b0cbf0" d="M1459 268h1v18h-1zM1462 268h1v18h-1zM1465 268h1v18h-1zM1468 268h1v18h-1zM1471 268h1v18h-1zM1474 268h1v18h-1zM1477 268h1v18h-1zM1480 268h1v18h-1zM1483 268h1v18h-1zM1486 268h1v18h-1zM1489 268h1v18h-1zM1492 268h1v18h-1zM1495 268h1v18h-1zM1498 268h1v18h-1zM1501 268h1v18h-1zM1504 268h1v18h-1zM1507 268h1v18h-1zM1510 268h1v18h-1zM1513 268h1v18h-1zM1516 268h1v18h-1zM1519 268h1v18h-1zM1522 268h1v18h-1zM1525 268h1v18h-1zM1528 268h1v18h-1zM1531 268h1v18h-1zM1534 268h1v18h-1zM1537 268h1v18h-1zM1540 268h1v18h-1zM1543 268h1v18h-1zM1546 268h1v18h-1zM1549 268h1v18h-1zM1552 268h1v18h-1zM1555 268h1v18h-1zM1558 268h1v18h-1zM1561 268h1v18h-1zM1564 268h1v18h-1zM1567 268h1v18h-1zM1570 268h1v18h-1zM1573 268h1v18h-1zM1576 268h1v18h-1zM1579 268h1v18h-1zM1582 268h1v18h-1zM1585 268h1v18h-1zM1588 268h1v18h-1zM1591 268h1v18h-1zM1594 268h1v18h-1zM1597 268h1v18h-1zM1600 268h1v18h-1zM1603 268h1v18h-1zM1606 268h1v18h-1zM1609 268h1v18h-1zM1612 268h1v18h-1zM1615 268h1v18h-1zM1618 268h1v18h-1zM1460 268h1v18h-1zM1462 268h1v18h-1zM1464 268h1v18h-1zM1467 268h1v18h-1zM1469 268h1v18h-1zM1471 268h1v18h-1z"/><path fill="#98c47e" d="M1460 286h1v18h-1zM1466 286h1v18h-1zM1472 286h1v18h-1zM1478 286h1v18h-1zM1484 286h1v18h-1zM1490 286h1v18h-1zM1496 286h1v18h-1zM1502 286h1v18h-1zM1508 286h1v18h-1zM1514 286h1v18h-1zM1520 286h1v18h-1zM1526 286h1v18h-1zM1532 286h1v18h-1zM1538 286h1v18h-1zM1544 286h1v18h-1zM1550 286h1v18h-1zM1556 286h1v18h-1zM1562 286h1v18h-1zM1568 286h1v18h-1zM1574 286h1v18h-1zM1580 286h1v18h-1zM1586 286h1v18h-1zM1592 286h1v18h-1zM1598 286h1v18h-1zM1604 286h1v18h-1zM1610 286h1v18h-1zM1616 286h1v18h-1z"/><path fill="#8770d6" d="M1665 232h1v36h-1z"/><path fill="#98c47e" d="M1690 142h2v18h-2z"/><path fill="#a56af2" d="M1692 142h1v18h-1z"/><path fill="#b0cbf0" d="M1694 142h1v18h-1zM1697 142h1v18h-1z"/><path fill="#98c47e" d="M1700 142h1v18h-1z"/><path fill="#b0cbf0" d="M1704 142h1v18h-1z"/><path fill="#8770d6" d="M1692 160h3v18h-3z"/><path fill="#98c47e" d="M1699 160h1v18h-1zM1690 178h1v18h-1zM1693 178h1v18h-1z"/><path fill="#b0cbf0" d="M1707 142h79v18h-79z"/><path fill="#38b79f" d="M1707 160h79v18h-79z"/><path fill="#b0cbf0" d="M1709 178h2v18h-2z"/><path fill="#e2a77a" d="M1711 178h75v18h-75z"/><path fill="#a56af2" d="M1709 196h3v18h-3z"/><path fill="#e2a77a" d="M1712 196h74v18h-74z"/><path fill="#8770d6" d="M1712 214h74v18h-74z"/><path fill="#a56af2" d="M1707 214h2v18h-2z"/><path fill="#b0cbf0" d="M1709 214h1v18h-1z"/><path fill="#a56af2" d="M1710 214h2v18h-2z"/><path fill="#0fbdd5" d="M1707 232h2v18h-2z"/><path fill="#a56af2" d="M1711 232h2v18h-2z"/><path fill="#e2a77a" d="M1715 232h18v18h-18z"/><path fill="#a56af2" d="M1733 232h1v18h-1z"/><path fill="#38b79f" d="M1734 232h3v18h-3z"/><path fill="#a56af2" d="M1737 232h1v18h-1z"/><path fill="#38b79f" d="M1737 232h3v18h-3z"/><path fill="#e2a77a" d="M1740 232h1v18h-1z"/><path fill="#a56af2" d="M1741 232h1v18h-1z"/><path fill="#38b79f" d="M1742 232h4v18h-4z"/><path fill="#e2a77a" d="M1746 232h1v18h-1z"/><path fill="#a56af2" d="M1747 232h1v18h-1z"/><path fill="#38b79f" d="M1748 232h4v18h-4z"/><path fill="#a56af2" d="M1752 232h1v18h-1z"/><path fill="#38b79f" d="M1753 232h4v18h-4z"/><path fill="#e2a77a" d="M1757 232h1v18h-1z"/><path fill="#38b79f" d="M1758 232h5v18h-5zM1764 232h5v18h-5z"/><path fill="#e2a77a" d="M1769 232h1v18h-1z"/><path fill="#38b79f" d="M1770 232h5v18h-5z"/><path fill="#e2a77a" d="M1775 232h1v18h-1z"/><path fill="#a56af2" d="M1776 232h1v18h-1z"/><path fill="#38b79f" d="M1777 232h3v18h-3z"/><path fill="#e2a77a" d="M1780 232h2v18h-2z"/><path fill="#38b79f" d="M1782 232h4v18h-4z"/><path fill="#8770d6" d="M1708 250h2v18h-2z"/><path fill="#98c47e" d="M1711 250h1v18h-1z"/><path fill="#a56af2" d="M1712 250h4v18h-4zM1717 250h1v18h-1z"/><path fill="#b0cbf0" d="M1718 250h2v18h-2zM1721 250h4v18h-4zM1726 250h6v18h-6z"/><path fill="#a56af2" d="M1734 250h4v18h-4zM1739 250h5v18h-5zM1745 250h8v18h-8zM1754 250h1v18h-1zM1756 250h3v18h-3zM1760 250h1v18h-1zM1762 250h3v18h-3zM1766 250h2v18h-2zM1768 250h4v18h-4zM1774 250h5v18h-5zM1780 250h4v18h-4z"/><path fill="#38b79f" d="M1708 268h1v18h-1z"/><path fill="#a56af2" d="M1709 268h1v18h-1zM1712 268h1v18h-1z"/><path fill="#98c47e" d="M1714 268h1v18h-1z"/><path fill="#b0cbf0" d="M1737 268h1v18h-1zM1742 268h1v18h-1zM1748 268h1v18h-1zM1754 268h1v18h-1zM1760 268h1v18h-1zM1766 268h1v18h-1zM1772 268h1v18h-1zM1777 268h1v18h-1zM1784 268h1v18h-1z"/><path fill="#98c47e" d="M1712 286h1v18h-1z"/><path fill="#38b79f" d="M653 436h1v18h-1zM656 436h1v18h-1zM658 436h1v18h-1zM660 436h1v18h-1zM662 436h1v18h-1zM665 436h1v18h-1zM667 436h1v18h-1zM669 436h1v18h-1zM671 436h1v18h-1zM674 436h1v18h-1zM676 436h1v18h-1zM678 436h1v18h-1zM680 436h1v18h-1zM682 436h1v18h-1zM684 436h1v18h-1zM686 436h1v18h-1zM688 436h1v18h-1zM690 436h1v18h-1zM692 436h1v18h-1zM694 436h1v18h-1zM696 436h1v18h-1zM698 436h1v18h-1zM700 436h1v18h-1zM702 436h1v18h-1zM704 436h1v18h-1zM706 436h1v18h-1zM708 436h1v18h-1zM710 436h1v18h-1zM712 436h1v18h-1zM714 436h1v18h-1zM716 436h1v18h-1zM718 436h1v18h-1zM720 436h1v18h-1zM723 436h1v18h-1zM725 436h1v18h-1zM727 436h1v18h-1zM729 436h1v18h-1zM731 436h1v18h-1zM733 436h1v18h-1zM735 436h1v18h-1zM737 436h1v18h-1zM739 436h1v18h-1zM742 436h1v18h-1zM744 436h1v18h-1zM746 436h1v18h-1zM748 436h1v18h-1zM750 436h1v18h-1zM752 436h1v18h-1zM754 436h1v18h-1zM756 436h1v18h-1zM758 436h1v18h-1zM760 436h1v18h-1zM762 436h1v18h-1zM877 436h1v18h-1zM880 436h1v18h-1zM883 436h1v18h-1zM885 436h1v18h-1zM887 436h1v18h-1zM889 436h1v18h-1zM892 436h1v18h-1zM894 436h1v18h-1zM897 436h1v18h-1zM901 436h1v18h-1zM904 436h1v18h-1zM908 436h1v18h-1zM911 436h1v18h-1zM913 436h1v18h-1zM916 436h1v18h-1zM919 436h1v18h-1zM922 436h1v18h-1zM925 436h1v18h-1zM927 436h1v18h-1zM929 436h1v18h-1zM931 436h1v18h-1zM934 436h1v18h-1zM937 436h1v18h-1zM940 436h1v18h-1zM942 436h1v18h-1zM945 436h1v18h-1zM947 436h1v18h-1zM949 436h1v18h-1zM951 436h1v18h-1zM953 436h1v18h-1zM956 436h1v18h-1zM959 436h1v18h-1zM962 436h1v18h-1zM964 436h1v18h-1zM966 436h1v18h-1zM968 436h1v18h-1zM971 436h1v18h-1zM975 436h1v18h-1zM977 436h1v18h-1zM980 436h1v18h-1zM984 436h1v18h-1zM987 436h1v18h-1zM989 436h1v18h-1zM992 436h1v18h-1zM994 436h1v18h-1zM997 436h1v18h-1zM1000 436h1v18h-1zM1003 436h1v18h-1zM1006 436h1v18h-1zM1009 436h1v18h-1zM1011 436h1v18h-1zM1014 436h1v18h-1zM1017 436h1v18h-1zM1020 436h1v18h-1zM1271 436h1v18h-1zM1273 436h1v18h-1zM1275 436h1v18h-1zM1277 436h1v18h-1zM1279 436h1v18h-1zM1281 436h1v18h-1zM1283 436h1v18h-1zM1285 436h1v18h-1zM1287 436h1v18h-1zM1289 436h1v18h-1zM1291 436h1v18h-1zM1293 436h1v18h-1zM1295 436h1v18h-1zM1297 436h1v18h-1zM1300 436h1v18h-1zM1302 436h1v18h-1zM1304 436h1v18h-1zM1307 436h1v18h-1zM1309 436h1v18h-1zM1311 436h1v18h-1zM1313 436h1v18h-1zM1315 436h1v18h-1zM1317 436h1v18h-1zM1319 436h1v18h-1zM1322 436h1v18h-1zM1324 436h1v18h-1zM1326 436h1v18h-1zM1328 436h1v18h-1zM1330 436h1v18h-1zM1332 436h1v18h-1zM1334 436h1v18h-1zM1336 436h1v18h-1zM1339 436h1v18h-1zM1342 436h1v18h-1zM1344 436h1v18h-1zM1347 436h1v18h-1zM1349 436h1v18h-1zM1351 436h1v18h-1zM1353 436h1v18h-1zM1355 436h1v18h-1zM1357 436h1v18h-1zM1360 436h1v18h-1zM1362 436h1v18h-1zM1364 436h1v18h-1zM1367 436h1v18h-1zM1369 436h1v18h-1zM1372 436h1v18h-1zM1374 436h1v18h-1zM1377 436h1v18h-1zM1380 436h1v18h-1zM1383 436h1v18h-1zM1385 436h1v18h-1z"/></svg>
<div class="t w" style="left:650px;top:98px;width:30px;height:18px;line-height:18px;color:#fff">14<i>...</i></div>
<div class="t" style="left:359px;top:141px;width:245px;height:18px;line-height:18px;color:#222">H:SCBCb:PendingSessionActivationInner</div>
<div class="t" style="left:420px;top:159px;width:70px;height:18px;line-height:18px;color:#222"><span style="letter-spacing:-0.4px">H:JSAnimate<i>...</i></span></div>
<div class="t w" style="left:420px;top:177px;width:70px;height:18px;line-height:18px;color:#fff">H:duration:<i>...</i></div>
<div class="t" style="left:420px;top:195px;width:70px;height:18px;line-height:18px;color:#222">H:FlushDirt<i>...</i></div>
<div class="t w" style="left:420px;top:213px;width:48px;height:18px;line-height:18px;color:#fff">H:Cus<i>...</i></div>
<div class="t" style="left:471px;top:213px;width:19px;height:18px;line-height:18px;color:#222">H</div>
<div class="t w" style="left:420px;top:231px;width:50px;height:18px;line-height:18px;color:#fff">H:JSVi<i>...</i></div>
<div class="t w" style="left:470px;top:231px;width:20px;height:18px;line-height:18px;color:#fff">H</div>
<div class="t" style="left:471px;top:249px;width:19px;height:18px;line-height:18px;color:#222">H</div>
<div class="t w" style="left:471px;top:267px;width:19px;height:18px;line-height:18px;color:#fff">H</div>
<div class="t" style="left:471px;top:285px;width:18px;height:18px;line-height:18px;color:#222">H</div>
<div class="t" style="left:471px;top:303px;width:18px;height:18px;line-height:18px;color:#222">H</div>
<div class="t" style="left:471px;top:321px;width:18px;height:18px;line-height:18px;color:#222">H</div>
<div class="t w" style="left:530px;top:159px;width:66px;height:18px;line-height:18px;color:#fff">H:JSAnimat<i>...</i></div>
<div class="t w" style="left:530px;top:177px;width:66px;height:18px;line-height:18px;color:#fff">H:duration<i>...</i></div>
<div class="t" style="left:530px;top:195px;width:33px;height:18px;line-height:18px;color:#222">H:F<i>...</i></div>
<div class="t" style="left:565px;top:195px;width:16px;height:18px;line-height:18px;color:#222">H</div>
<div class="t w" style="left:651px;top:141px;width:32px;height:18px;line-height:18px;color:#fff">H:R<i>...</i></div>
<div class="t w" style="left:651px;top:159px;width:32px;height:18px;line-height:18px;color:#fff">H:<i>...</i></div>
<div class="t" style="left:651px;top:177px;width:32px;height:18px;line-height:18px;color:#222">H:F<i>...</i></div>
<div class="t" style="left:651px;top:195px;width:17px;height:18px;line-height:18px;color:#222">H</div>
<div class="t" style="left:706px;top:141px;width:61px;height:18px;line-height:18px;color:#222">H:JSAni<i>...</i></div>
<div class="t w" style="left:706px;top:159px;width:61px;height:18px;line-height:18px;color:#fff">H:durat<i>...</i></div>
<div class="t" style="left:706px;top:177px;width:45px;height:18px;line-height:18px;color:#222">H:Flus<i>...</i></div>
<div class="t" style="left:713px;top:195px;width:22px;height:18px;line-height:18px;color:#222">H<i>...</i></div>
<div class="t" style="left:735px;top:195px;width:16px;height:18px;line-height:18px;color:#222">H</div>
<div class="t w" style="left:706px;top:213px;width:29px;height:18px;line-height:18px;color:#fff">H<i>...</i></div>
<div class="t w" style="left:735px;top:213px;width:16px;height:18px;line-height:18px;color:#fff">H</div>
<div class="t" style="left:706px;top:231px;width:32px;height:18px;line-height:18px;color:#222">H</div>
<div class="t w" style="left:713px;top:249px;width:18px;height:18px;line-height:18px;color:#fff">H</div>
<div class="t" style="left:713px;top:267px;width:18px;height:18px;line-height:18px;color:#222">H</div>
<div class="t" style="left:713px;top:285px;width:18px;height:18px;line-height:18px;color:#222">H</div>
<div class="t w" style="left:815px;top:141px;width:16px;height:18px;line-height:18px;color:#fff">H</div>
<div class="t w" style="left:854px;top:141px;width:352px;height:18px;line-height:18px;color:#fff">H:ViewChangeCallback(2224, 2496)</div>
<div class="t" style="left:854px;top:159px;width:351px;height:18px;line-height:18px;color:#222">H:FlushDirtyNodeUpdate</div>
<div class="t" style="left:854px;top:177px;width:78px;height:18px;line-height:18px;color:#3a4842">H:CustomNo<i>...</i></div>
<div class="t" style="left:933px;top:177px;width:72px;height:18px;line-height:18px;color:#3a4842">H:CustomN<i>...</i></div>
<div class="t" style="left:1005px;top:177px;width:82px;height:18px;line-height:18px;color:#3a4842">H:CustomNo<i>...</i></div>
<div class="t" style="left:1087px;top:177px;width:56px;height:18px;line-height:18px;color:#3a4842"><span style="letter-spacing:-0.3px">H:Custom<i>...</i></span></div>
<div class="t" style="left:1143px;top:177px;width:54px;height:18px;line-height:18px;color:#3a4842">H:Cu<i>...</i></div>
<div class="t w" style="left:855px;top:195px;width:77px;height:18px;line-height:18px;color:#fff">H:JSView: Ex<i>...</i></div>
<div class="t w" style="left:932px;top:195px;width:73px;height:18px;line-height:18px;color:#fff">H:JSView: E<i>...</i></div>
<div class="t w" style="left:1005px;top:195px;width:82px;height:18px;line-height:18px;color:#fff">H:JSView: Ex<i>...</i></div>
<div class="t w" style="left:1087px;top:195px;width:56px;height:18px;line-height:18px;color:#fff"><span style="letter-spacing:-0.5px">H:JSView: <i>...</i></span></div>
<div class="t w" style="left:1143px;top:195px;width:54px;height:18px;line-height:18px;color:#fff">H:JSVi<i>...</i></div>
<div class="t" style="left:873px;top:213px;width:65px;height:18px;line-height:18px;color:#222">H:ForE<i>...</i></div>
<div class="t" style="left:950px;top:213px;width:58px;height:18px;line-height:18px;color:#222">H:ForE<i>...</i></div>
<div class="t" style="left:1024px;top:213px;width:62px;height:18px;line-height:18px;color:#222">H:ForEa<i>...</i></div>
<div class="t" style="left:1104px;top:213px;width:48px;height:18px;line-height:18px;color:#222">H:For<i>...</i></div>
<div class="t" style="left:1153px;top:213px;width:44px;height:18px;line-height:18px;color:#222">H:F<i>...</i></div>
<div class="t" style="left:1045px;top:231px;width:17px;height:18px;line-height:18px;color:#222">H</div>
<div class="t" style="left:1045px;top:249px;width:15px;height:18px;line-height:18px;color:#222">H</div>
<div class="t" style="left:1458px;top:141px;width:216px;height:18px;line-height:18px;color:#222">H:JSAnimateTo</div>
<div class="t w" style="left:1458px;top:159px;width:232px;height:18px;line-height:18px;color:#fff;text-align:left;padding-left:5px">H:duration:0, curve:cubic-bezier(0.330<i>...</i></div>
<div class="t" style="left:1458px;top:177px;width:216px;height:18px;line-height:18px;color:#222">H:UITaskScheduler::FlushTask</div>
<div class="t" style="left:1458px;top:195px;width:216px;height:18px;line-height:18px;color:#222">H:FlushLayoutTask</div>
<div class="t w" style="left:1458px;top:213px;width:165px;height:18px;line-height:18px;color:#fff;text-align:left;padding-left:5px"><span style="letter-spacing:-0.35px">H:CreateTaskMeasure[Column][se<i>...</i></span></div>
<div class="t" style="left:1707px;top:141px;width:74px;height:18px;line-height:18px;color:#222"><span style="letter-spacing:-0.5px">H:JSAnimateT<i>...</i></span></div>
<div class="t w" style="left:1707px;top:159px;width:74px;height:18px;line-height:18px;color:#fff">H:duration:4<i>...</i></div>
<div class="t" style="left:1711px;top:177px;width:71px;height:18px;line-height:18px;color:#222">H:UITaskSch<i>...</i></div>
<div class="t" style="left:1712px;top:195px;width:70px;height:18px;line-height:18px;color:#222">H:FlushLayo<i>...</i></div>
<div class="t w" style="left:1712px;top:213px;width:70px;height:18px;line-height:18px;color:#fff">H:CreateTas<i>...</i></div>
<div class="t" style="left:1715px;top:231px;width:18px;height:18px;line-height:18px;color:#222">H</div>
<div class="a" style="left:854px;top:178px;width:78px;height:18px;border:2px solid #263a33"></div>
<svg class="a" style="left:1779px;top:142px" width="8" height="18" viewBox="0 0 8 18"><path d="M6.3 0.3 L1.2 3.4 L3.4 5.2 L6.3 8.3 L0.2 14.2 L2.6 12.2 L4.3 8.2 L2.6 5.8 L6.3 2.2 Z" fill="#fff"/></svg>
<svg class="a" style="left:1779px;top:160px" width="8" height="18" viewBox="0 0 8 18"><path d="M6.3 0.3 L1.2 3.4 L3.4 5.2 L6.3 8.3 L0.2 14.2 L2.6 12.2 L4.3 8.2 L2.6 5.8 L6.3 2.2 Z" fill="#fff"/></svg>
<svg class="a" style="left:1779px;top:178px" width="8" height="18" viewBox="0 0 8 18"><path d="M6.3 0.3 L1.2 3.4 L3.4 5.2 L6.3 8.3 L0.2 14.2 L2.6 12.2 L4.3 8.2 L2.6 5.8 L6.3 2.2 Z" fill="#fff"/></svg>
<svg class="a" style="left:1779px;top:196px" width="8" height="18" viewBox="0 0 8 18"><path d="M6.3 0.3 L1.2 3.4 L3.4 5.2 L6.3 8.3 L0.2 14.2 L2.6 12.2 L4.3 8.2 L2.6 5.8 L6.3 2.2 Z" fill="#fff"/></svg>
<svg class="a" style="left:1779px;top:214px" width="8" height="18" viewBox="0 0 8 18"><path d="M6.3 0.3 L1.2 3.4 L3.4 5.2 L6.3 8.3 L0.2 14.2 L2.6 12.2 L4.3 8.2 L2.6 5.8 L6.3 2.2 Z" fill="#fff"/></svg>
<div class="a" style="left:1786px;top:0;width:7px;height:456px;background:#f7f7f7"></div>
<div class="a" style="left:240px;top:446px;width:1546px;height:10px;background:linear-gradient(rgba(0,0,0,0),rgba(0,0,0,0.035))"></div>
<div class="a" style="left:0;top:456px;width:1793px;height:1px;background:#dcdcdc"></div>
<div class="a" style="left:0;top:457px;width:1793px;height:1px;background:#fdfdfd"></div>
<div class="a" style="left:0;top:458px;width:1793px;height:1px;background:#c6c6c6"></div>
<div class="a" style="left:0;top:459px;width:1793px;height:38px;background:#f1f1f1"></div>
<div class="a" style="left:0;top:464px;width:143px;height:34px;background:#fff;border:1px solid #c8c8c8;border-left:none;border-bottom:none;border-top-right-radius:4px"></div>
<div class="lbl" style="left:11px;top:476px;font-size:15.3px;color:#222">Current Selection</div>
<div class="lbl" style="left:2px;top:511px;font-size:16.5px;color:#222">Slice Details</div>
<div class="lbl" style="left:6px;top:550px;font-size:17px;color:#2b2b2b">Name</div>
<div class="lbl" style="left:191px;top:550px;font-size:17px;color:#2b2b2b">H:CustomNodeUpdate SwiperPage</div>
<div class="lbl" style="left:6px;top:578px;font-size:17px;color:#2b2b2b">StartTime(Relative)</div>
<div class="lbl" style="left:191px;top:578px;font-size:17px;color:#2b2b2b">50s 829ms 217μs</div>
<div class="lbl" style="left:6px;top:606px;font-size:17px;color:#2b2b2b">StartTime(Absolute)</div>
<div class="lbl" style="left:191px;top:606px;font-size:17px;color:#2b2b2b">7910.459435s</div>
<div class="lbl" style="left:6px;top:634px;font-size:17px;color:#2b2b2b">Duration</div>
<div class="lbl" style="left:191px;top:634px;font-size:17px;color:#2b2b2b">313ms 897μs</div>
<div class="lbl" style="left:6px;top:662px;font-size:17px;color:#2b2b2b">depth</div>
<div class="lbl" style="left:191px;top:662px;font-size:17px;color:#2b2b2b">2</div>
<div class="a" style="left:1787px;top:497px;width:6px;height:229px;background:#f9f9f9"></div>
<div class="a" style="left:1789px;top:520px;width:5px;height:111px;background:#7a7a7a;border-radius:3px"></div>
<svg class="a" style="left:1740px;top:466px" width="52" height="24" viewBox="0 0 52 24"><rect x="4.5" y="4.5" width="15" height="2.5" fill="#555"/><path d="M12 8.5 L7 14.5 L10.8 14.5 L10.8 19.5 L13.2 19.5 L13.2 14.5 L17 14.5 Z" fill="#555"/><path d="M36.5 8.5 L42 14 L47.5 8.5" stroke="#555" stroke-width="1.8" fill="none"/></svg>
<div class="a" style="left:1790px;top:31px;width:4px;height:17px;background:#8a8a8a;border-radius:3px 0 0 3px"></div>
<svg class="a" style="left:1788px;top:0px" width="5" height="6"><path d="M5 1 L5 5 L1 5 Z" fill="#777"/></svg>
<svg class="a" style="left:1788px;top:441px" width="5" height="6"><path d="M1 1 L5 1 L5 5 Z" fill="#777"/></svg>
<svg class="a" style="left:1788px;top:506px" width="5" height="6"><path d="M5 1 L5 5 L1 5 Z" fill="#777"/></svg>
</body></html>
